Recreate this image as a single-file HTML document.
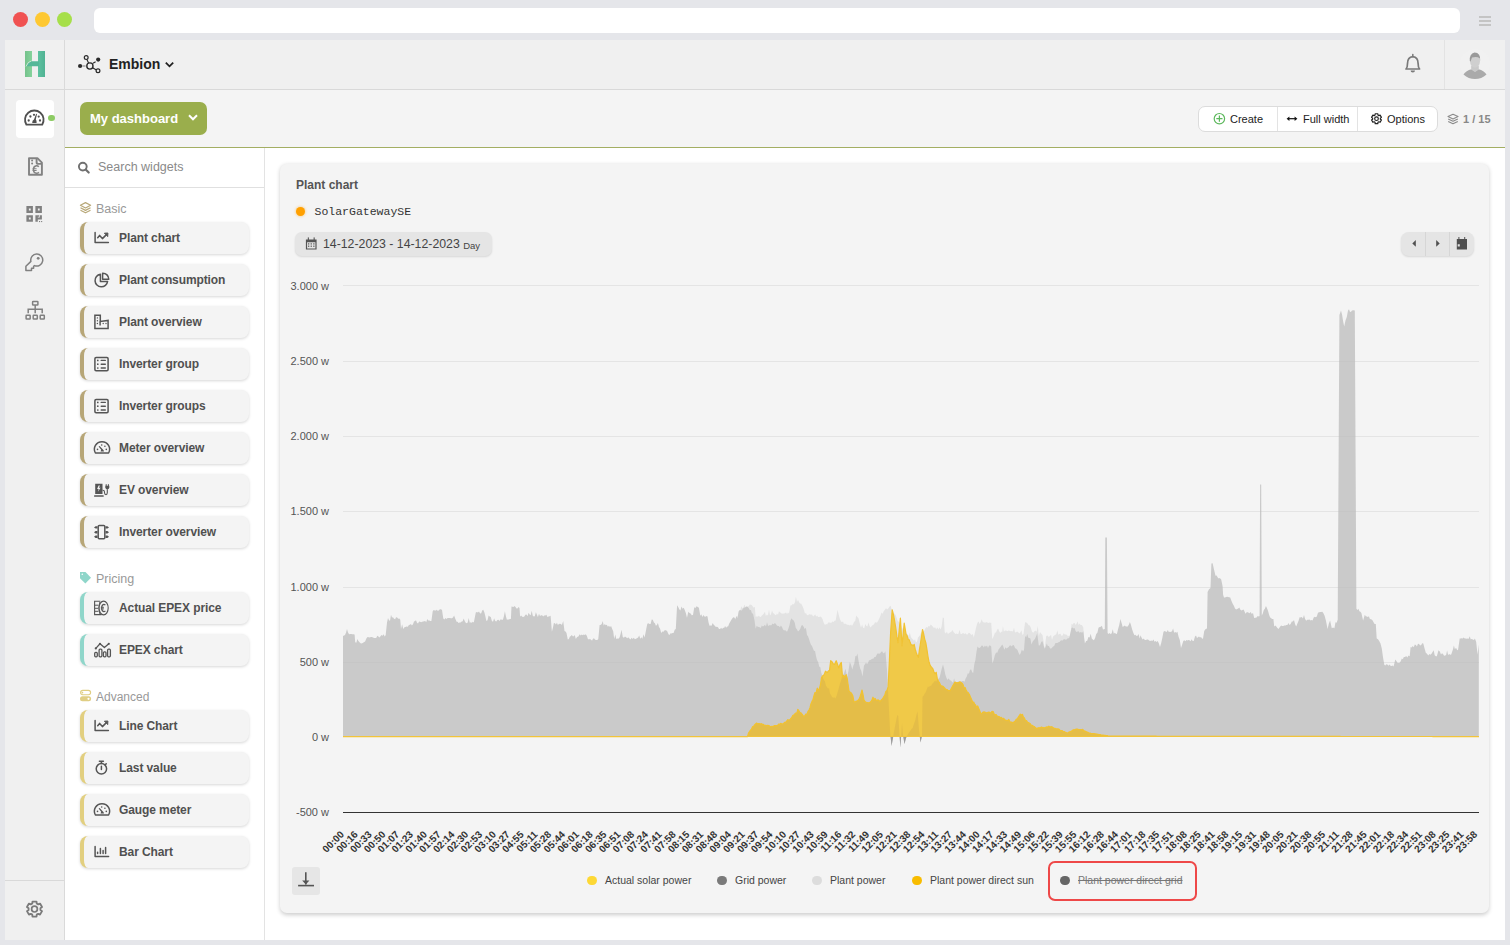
<!DOCTYPE html>
<html>
<head>
<meta charset="utf-8">
<style>
*{box-sizing:border-box;margin:0;padding:0}
html,body{width:1510px;height:945px;overflow:hidden;background:#e5e6ea;font-family:"Liberation Sans",sans-serif;position:relative}
.a{position:absolute}
.chart{position:absolute;left:0;top:0}
svg.i{position:absolute;overflow:visible}
.dot{position:absolute;width:15px;height:15px;border-radius:50%;top:12.4px}
.ham{position:absolute;left:1479px;width:12px;height:2px;background:#c4c4c4}
.sect{position:absolute;left:96px;font-size:12.5px;color:#999;line-height:14px;white-space:nowrap}
.item{position:absolute;left:80px;width:169px;height:32px;background:#f4f4f4;border-radius:8px;border-left:4px solid #b7a677;box-shadow:0 1px 3px rgba(0,0,0,.16);font-weight:bold;font-size:12px;color:#505050;line-height:32px;padding-left:35px;white-space:nowrap;letter-spacing:-0.1px}
.item svg{position:absolute;left:10px;top:8px;overflow:visible}
.item.p{border-left-color:#8fd6ca}
.item.v{border-left-color:#e2cf7f}
.legend{position:absolute;font-size:10.5px;color:#444;top:874px;line-height:13px;white-space:nowrap}
.ldot{position:absolute;width:9.5px;height:9.5px;border-radius:50%;top:875.7px}
.bt{position:absolute;top:106px;height:26px;line-height:26px;font-size:11px;color:#222;white-space:nowrap}
</style>
</head>
<body>
<!-- browser chrome -->
<div class="dot" style="left:13px;background:#f05252"></div>
<div class="dot" style="left:35px;background:#fec832"></div>
<div class="dot" style="left:57px;background:#a6df4a"></div>
<div class="a" style="left:94px;top:8px;width:1366px;height:25px;background:#fff;border-radius:6px"></div>
<div class="ham" style="top:16px"></div>
<div class="ham" style="top:20px"></div>
<div class="ham" style="top:24px"></div>

<!-- app frame -->
<div class="a" style="left:5px;top:40px;width:1500px;height:900px;background:#fff"></div>
<!-- icon bar -->
<div class="a" style="left:5px;top:40px;width:60px;height:900px;background:#f0f0f0;border-right:1px solid #dadada"></div>
<div class="a" style="left:5px;top:89px;width:59px;height:1px;background:#d9d9d9"></div>
<div class="a" style="left:5px;top:880px;width:59px;height:1px;background:#d9d9d9"></div>
<div class="a" style="left:16px;top:100px;width:38px;height:38px;background:#fff;border-radius:4px"></div>
<div class="a" style="left:48px;top:114.5px;width:6.5px;height:6.5px;background:#8dcb64;border-radius:50%"></div>
<!-- header -->
<div class="a" style="left:65px;top:40px;width:1440px;height:50px;background:#f0f0f0;border-bottom:1px solid #d9d9d9"></div>
<div class="a" style="left:1444px;top:40px;width:1px;height:49px;background:#e3e3e3"></div>
<div class="a" style="left:109px;top:56px;font-size:14px;font-weight:bold;color:#222;line-height:16px">Embion</div>
<!-- toolbar -->
<div class="a" style="left:65px;top:90px;width:1440px;height:57px;background:#f4f4f4"></div>
<div class="a" style="left:65px;top:146.5px;width:1440px;height:1.5px;background:#a3ae62"></div>
<div class="a" style="left:80px;top:102px;width:127px;height:33px;background:#9aae4c;border-radius:7px"></div>
<div class="a" style="left:90px;top:111px;color:#fff;font-weight:bold;font-size:13px;line-height:15px;white-space:nowrap">My dashboard</div>
<div class="a" style="left:1198px;top:106px;width:240px;height:26px;background:#fff;border:1px solid #dcdcdc;border-radius:7px"></div>
<div class="a" style="left:1277px;top:107px;width:1px;height:24px;background:#e3e3e3"></div>
<div class="a" style="left:1357px;top:107px;width:1px;height:24px;background:#e3e3e3"></div>
<div class="bt" style="left:1230px">Create</div>
<div class="bt" style="left:1303px">Full width</div>
<div class="bt" style="left:1387px">Options</div>
<div class="bt" style="left:1463px;font-weight:bold;color:#888">1 / 15</div>
<!-- widget sidebar -->
<div class="a" style="left:65px;top:148px;width:200px;height:792px;background:#fff;border-right:1px solid #e3e3e3"></div>
<div class="a" style="left:65px;top:187px;width:199px;height:1px;background:#e0e0e0"></div>
<div class="a" style="left:98px;top:160px;font-size:12.5px;color:#8a8a8a;line-height:14px;white-space:nowrap">Search widgets</div>
<div class="sect" style="top:202px">Basic</div>
<div class="item" style="top:222px">Plant chart</div>
<div class="item" style="top:264px">Plant consumption</div>
<div class="item" style="top:306px">Plant overview</div>
<div class="item" style="top:348px">Inverter group</div>
<div class="item" style="top:390px">Inverter groups</div>
<div class="item" style="top:432px">Meter overview</div>
<div class="item" style="top:474px">EV overview</div>
<div class="item" style="top:516px">Inverter overview</div>
<div class="sect" style="top:572px">Pricing</div>
<div class="item p" style="top:592px">Actual EPEX price</div>
<div class="item p" style="top:634px">EPEX chart</div>
<div class="sect" style="top:690px;font-size:12px">Advanced</div>
<div class="item v" style="top:710px">Line Chart</div>
<div class="item v" style="top:752px">Last value</div>
<div class="item v" style="top:794px">Gauge meter</div>
<div class="item v" style="top:836px">Bar Chart</div>

<!-- card -->
<div class="a" style="left:280px;top:164px;width:1209px;height:749px;background:#f4f4f4;border-radius:7px;box-shadow:0 1.5px 4px rgba(0,0,0,.2)"></div>
<div class="a" style="left:296px;top:178px;font-size:12px;font-weight:bold;color:#555;line-height:14px;white-space:nowrap">Plant chart</div>
<div class="a" style="left:295.5px;top:206.5px;width:9px;height:9px;background:#ffa000;border-radius:50%;box-shadow:0 0 3px rgba(255,160,0,.6)"></div>
<div class="a" style="left:314.5px;top:205px;font-family:'Liberation Mono',monospace;font-size:11.5px;color:#333;line-height:14px;white-space:nowrap">SolarGatewaySE</div>
<div class="a" style="left:295px;top:232px;width:197px;height:24px;background:#e5e5e5;border-radius:7px;box-shadow:0 1px 2px rgba(0,0,0,.12)"></div>
<div class="a" style="left:323px;top:237px;font-size:12.3px;color:#444;line-height:15px;white-space:nowrap">14-12-2023 - 14-12-2023 <span style="font-size:9.5px;position:relative;top:1px">Day</span></div>
<div class="a" style="left:1401px;top:232px;width:73px;height:24px;background:#e5e5e5;border-radius:8px;box-shadow:0 1px 2px rgba(0,0,0,.12)"></div>
<div class="a" style="left:1425px;top:232px;width:1px;height:24px;background:#d6d6d6"></div>
<div class="a" style="left:1449px;top:232px;width:1px;height:24px;background:#d6d6d6"></div>
<div class="a" style="left:292px;top:867px;width:27.5px;height:27.5px;background:#e6e6e6;border-radius:3px"></div>

<svg class="chart" width="1510" height="945" viewBox="0 0 1510 945">
<line x1="343" y1="285.5" x2="1479" y2="285.5" stroke="#e9e9e9" stroke-width="1"/>
<line x1="343" y1="361.5" x2="1479" y2="361.5" stroke="#e9e9e9" stroke-width="1"/>
<line x1="343" y1="436.5" x2="1479" y2="436.5" stroke="#e9e9e9" stroke-width="1"/>
<line x1="343" y1="511.5" x2="1479" y2="511.5" stroke="#e9e9e9" stroke-width="1"/>
<line x1="343" y1="587.5" x2="1479" y2="587.5" stroke="#e9e9e9" stroke-width="1"/>
<line x1="343" y1="662.5" x2="1479" y2="662.5" stroke="#e9e9e9" stroke-width="1"/>
<defs><clipPath id="gclip"><path d="M343.0,736.6 L343.0,636.0 L344.0,635.4 L345.0,634.9 L346.0,632.8 L347.0,629.1 L348.0,632.6 L349.1,634.2 L350.2,634.1 L351.3,633.9 L352.4,634.2 L353.5,634.2 L354.6,634.4 L355.2,642.3 L356.3,642.7 L357.4,639.1 L358.4,641.1 L359.5,642.2 L360.6,643.3 L361.6,643.4 L362.7,643.1 L363.8,642.3 L365.1,641.4 L366.5,638.3 L367.6,637.1 L368.7,637.2 L369.7,637.6 L370.8,637.1 L371.9,637.1 L373.0,637.5 L374.1,638.1 L375.2,638.0 L376.2,638.0 L377.3,635.7 L378.4,636.4 L379.4,637.4 L380.5,636.2 L381.5,635.0 L382.6,635.8 L383.6,634.3 L384.7,636.5 L385.7,635.0 L387.0,622.5 L388.0,617.9 L389.0,620.2 L390.0,620.8 L391.0,614.7 L392.0,617.6 L393.0,617.2 L394.0,618.8 L395.1,619.2 L396.1,617.2 L397.2,617.5 L398.2,618.8 L399.3,618.5 L400.3,619.8 L401.0,629.0 L402.1,624.3 L403.3,628.9 L404.4,627.2 L405.5,627.1 L406.6,626.4 L407.8,626.8 L408.9,625.1 L409.9,624.7 L410.9,623.9 L411.9,625.6 L413.0,624.2 L414.0,621.5 L415.0,620.9 L416.0,620.2 L417.0,622.7 L418.0,623.4 L419.1,621.4 L420.1,621.7 L421.1,622.3 L422.1,621.8 L423.1,621.4 L424.2,621.3 L425.2,621.0 L426.2,622.2 L427.3,619.1 L428.3,620.6 L429.3,620.6 L430.4,621.0 L431.4,621.1 L432.7,611.2 L433.7,610.0 L434.8,610.5 L435.8,610.6 L436.8,609.8 L437.9,610.9 L438.9,610.2 L439.9,609.2 L441.0,609.2 L442.0,609.9 L443.3,618.5 L444.4,619.4 L445.5,617.9 L446.5,618.9 L447.6,618.1 L448.7,618.0 L449.8,617.9 L450.9,618.3 L452.0,618.3 L453.0,617.6 L454.1,615.6 L455.2,618.5 L456.6,621.8 L457.6,621.7 L458.6,623.0 L459.6,622.6 L460.6,622.4 L461.7,621.5 L462.7,621.3 L463.7,618.6 L464.7,620.9 L465.7,622.7 L466.7,623.2 L467.7,622.5 L468.7,618.1 L469.8,622.8 L470.8,622.2 L471.8,622.7 L472.8,621.8 L473.8,622.5 L474.8,617.4 L475.8,612.5 L476.9,612.1 L477.9,612.6 L479.0,611.6 L480.1,613.6 L481.2,613.3 L482.2,610.4 L483.3,609.7 L484.4,612.5 L485.4,616.6 L486.4,621.1 L487.5,620.3 L488.6,615.4 L489.7,616.5 L490.8,617.1 L491.9,621.0 L493.0,621.8 L494.1,618.3 L495.2,621.0 L496.3,621.4 L497.4,620.1 L498.5,619.7 L499.6,621.0 L500.7,619.2 L501.8,619.7 L502.9,619.8 L503.9,616.2 L504.9,611.2 L505.9,616.3 L506.9,619.8 L507.9,619.4 L508.9,619.4 L509.9,619.1 L510.9,619.1 L511.5,606.6 L512.5,606.7 L513.5,607.0 L514.5,606.0 L515.5,607.1 L516.5,608.5 L517.5,608.6 L518.5,607.1 L519.5,607.9 L520.1,616.5 L521.2,615.4 L522.2,616.7 L523.3,616.9 L524.3,616.6 L525.4,614.8 L526.5,614.4 L527.5,616.3 L528.6,612.7 L529.6,614.5 L530.7,615.2 L531.7,610.7 L532.8,615.8 L533.8,616.6 L534.8,616.3 L535.9,612.3 L536.9,614.7 L537.9,617.0 L539.0,613.8 L540.0,616.0 L541.1,615.3 L542.1,615.3 L543.2,616.6 L544.2,615.6 L545.3,615.5 L546.4,614.8 L547.4,617.1 L548.5,616.5 L549.5,616.3 L550.6,615.8 L551.9,631.7 L552.9,627.8 L553.9,623.0 L554.9,623.2 L555.9,624.5 L556.9,622.7 L557.9,625.1 L558.9,624.1 L559.9,623.7 L560.9,624.0 L561.9,625.0 L563.2,621.0 L564.5,631.0 L565.5,631.5 L566.5,633.0 L567.8,639.6 L568.8,638.9 L569.8,636.8 L570.8,635.9 L571.8,635.0 L572.8,636.2 L573.8,636.2 L574.8,634.9 L575.8,638.9 L577.1,637.0 L578.4,636.5 L579.7,634.3 L580.7,635.6 L581.7,634.6 L582.7,635.2 L583.7,634.4 L584.7,634.9 L585.7,634.3 L586.8,635.8 L587.9,639.0 L589.0,639.6 L590.0,638.8 L591.1,640.0 L592.1,640.6 L593.1,638.6 L594.2,638.6 L595.2,639.7 L596.2,640.1 L597.3,639.9 L598.3,638.9 L599.6,625.0 L600.6,624.9 L601.7,624.1 L602.7,621.1 L603.7,625.5 L604.8,624.1 L605.8,625.3 L606.8,624.8 L607.9,626.8 L608.9,625.7 L610.0,626.9 L611.1,626.1 L612.2,629.0 L613.2,631.3 L614.2,638.9 L615.3,634.5 L616.3,639.0 L617.4,638.6 L618.4,638.7 L619.5,637.6 L620.5,634.3 L621.5,629.7 L622.8,637.0 L623.9,637.7 L625.0,636.4 L626.1,637.2 L627.2,638.3 L628.3,637.2 L629.4,638.6 L630.5,639.5 L631.6,637.7 L632.7,638.9 L633.8,637.8 L634.9,639.2 L635.9,638.7 L637.0,638.3 L638.1,637.5 L639.2,635.6 L640.3,638.7 L641.4,637.3 L642.4,638.8 L643.5,634.3 L644.6,637.6 L646.0,630.3 L647.3,623.7 L648.4,623.2 L649.5,624.0 L650.6,624.0 L651.7,619.6 L652.8,619.8 L653.9,622.4 L654.9,623.2 L655.9,625.7 L656.9,625.0 L657.9,623.0 L659.0,627.0 L660.1,628.7 L661.2,633.0 L662.4,631.5 L663.5,631.8 L664.6,630.3 L665.8,630.3 L667.1,631.1 L668.5,634.3 L669.5,635.0 L670.5,633.3 L671.5,633.5 L672.5,633.0 L673.6,632.9 L674.7,629.8 L675.8,629.0 L677.1,605.2 L678.2,606.9 L679.3,609.3 L680.4,610.5 L681.5,606.6 L682.6,608.8 L683.7,607.8 L684.8,610.3 L685.9,613.2 L687.0,617.7 L688.3,611.8 L689.5,613.0 L690.6,613.6 L691.8,615.2 L693.0,615.0 L694.3,607.2 L695.4,608.1 L696.6,606.3 L697.8,607.0 L698.9,607.8 L700.3,615.8 L701.3,614.2 L702.4,616.9 L703.4,615.1 L704.4,616.4 L705.4,616.8 L706.5,615.9 L707.5,616.4 L708.5,622.2 L709.5,625.7 L710.6,625.5 L711.6,625.7 L712.7,623.0 L713.7,624.8 L714.8,625.7 L715.9,626.9 L716.9,626.8 L718.0,627.2 L719.0,629.0 L720.1,629.0 L721.1,627.8 L722.1,628.9 L723.1,627.7 L724.1,628.0 L725.1,626.1 L726.1,627.8 L727.1,626.6 L728.1,626.4 L729.2,623.4 L730.3,621.7 L731.4,619.7 L732.4,618.3 L733.4,617.3 L734.4,617.4 L735.4,619.4 L736.4,615.8 L737.4,618.4 L738.7,611.2 L740.0,609.7 L741.3,610.7 L742.4,609.5 L743.5,607.9 L744.5,607.6 L745.6,607.3 L746.7,606.5 L747.8,607.1 L748.8,608.2 L749.9,610.3 L750.9,610.0 L752.0,613.5 L753.0,613.4 L754.4,619.8 L755.7,628.7 L756.7,625.8 L757.7,626.8 L758.7,626.9 L759.8,627.3 L760.8,628.1 L761.8,625.5 L762.8,626.6 L763.8,626.0 L764.9,624.7 L766.0,626.4 L767.0,622.3 L768.1,626.0 L769.2,625.3 L770.3,625.3 L771.4,625.2 L772.4,623.6 L773.5,624.3 L774.6,623.3 L775.6,623.4 L776.7,625.2 L777.8,625.9 L778.8,626.0 L779.9,627.2 L780.9,625.4 L782.0,627.0 L783.0,629.6 L784.1,630.4 L785.1,629.9 L786.2,631.3 L787.2,631.4 L788.3,628.7 L789.4,625.4 L790.4,620.4 L791.5,618.2 L792.6,619.7 L793.7,620.5 L794.8,623.1 L795.8,627.9 L796.9,629.2 L798.0,631.4 L799.1,630.5 L800.2,629.0 L801.3,625.8 L802.4,625.0 L803.5,626.4 L804.7,629.0 L805.9,627.8 L807.0,635.0 L808.0,636.2 L809.0,638.9 L810.0,642.2 L811.0,644.8 L812.0,646.0 L813.0,648.6 L814.0,651.0 L815.0,650.8 L816.1,656.4 L817.1,660.2 L818.2,662.3 L819.2,666.5 L820.3,667.3 L821.3,672.7 L822.7,677.0 L823.8,679.9 L824.9,681.3 L825.9,685.8 L827.0,687.0 L828.0,688.8 L829.0,688.1 L830.0,693.6 L831.0,695.0 L832.1,697.1 L833.2,697.8 L834.3,697.3 L835.4,698.4 L836.7,695.6 L838.0,690.8 L839.0,687.2 L840.0,683.4 L841.0,681.1 L842.0,676.4 L843.8,673.8 L845.5,668.8 L847.2,677.0 L848.5,670.6 L849.8,662.0 L851.0,664.7 L852.3,669.6 L853.3,665.8 L854.3,663.5 L855.4,656.0 L856.4,656.3 L857.4,653.5 L859.0,663.7 L860.2,668.6 L861.3,671.1 L862.5,676.4 L864.0,665.4 L865.0,664.3 L866.0,662.5 L867.0,664.1 L868.0,663.0 L869.0,660.3 L870.0,660.3 L871.1,659.4 L872.2,658.8 L873.3,658.8 L874.5,657.0 L875.6,657.0 L876.7,654.8 L877.8,653.3 L878.9,653.8 L880.0,653.4 L881.1,652.1 L882.1,651.2 L883.2,653.3 L884.3,652.9 L885.4,651.2 L887.0,670.0 L888.5,700.0 L890.0,730.0 L891.5,746.0 L893.0,738.0 L894.1,731.3 L895.2,725.6 L896.3,719.7 L897.3,715.1 L898.3,716.0 L899.5,735.0 L900.4,747.5 L902.0,723.0 L903.0,735.0 L904.5,744.0 L906.0,738.0 L907.8,734.4 L909.0,732.6 L910.2,731.1 L911.5,729.1 L912.7,727.9 L913.9,724.0 L915.2,720.6 L916.4,714.9 L917.6,711.5 L919.0,730.0 L920.5,742.6 L922.0,736.0 L922.5,696.7 L923.6,695.7 L924.7,693.5 L925.8,691.9 L926.8,689.3 L927.9,686.5 L929.0,686.9 L930.0,685.8 L931.0,686.1 L932.0,684.2 L933.0,683.0 L934.0,682.0 L935.1,680.4 L936.2,681.7 L937.2,679.4 L938.3,678.7 L939.4,678.0 L940.6,673.4 L941.8,668.2 L943.0,664.6 L944.2,669.1 L945.3,674.4 L946.5,678.0 L947.6,679.9 L948.7,678.3 L949.8,680.3 L950.9,680.4 L952.0,681.7 L953.0,682.8 L954.1,678.2 L955.1,682.7 L956.2,682.1 L957.2,682.8 L958.2,681.4 L959.3,681.2 L960.3,682.9 L961.4,681.2 L962.4,681.1 L963.5,681.1 L964.5,681.7 L965.6,678.5 L966.7,676.8 L967.8,673.3 L968.9,673.8 L970.0,670.1 L971.1,669.3 L972.2,672.3 L973.2,673.0 L974.3,664.2 L975.4,659.9 L976.4,652.3 L977.5,646.6 L978.6,647.7 L979.6,647.9 L980.7,647.0 L981.7,645.4 L982.8,645.8 L983.8,647.4 L984.9,645.4 L985.9,646.7 L987.0,645.6 L988.0,647.9 L989.1,645.6 L990.1,645.6 L991.2,646.6 L992.3,663.5 L993.6,660.3 L994.9,655.0 L996.1,652.4 L997.3,652.8 L998.5,649.4 L999.7,648.1 L1001.0,646.2 L1002.3,644.4 L1003.3,646.6 L1004.4,649.7 L1005.5,647.3 L1006.5,648.5 L1007.6,647.7 L1008.7,647.0 L1009.7,645.4 L1010.8,645.5 L1011.9,646.6 L1012.9,644.7 L1014.0,645.5 L1015.2,648.3 L1016.3,648.7 L1017.5,650.0 L1018.6,652.9 L1019.8,655.0 L1020.8,652.7 L1021.9,649.4 L1023.0,651.5 L1024.0,649.7 L1025.1,636.0 L1026.2,637.2 L1027.2,634.0 L1028.3,637.8 L1029.3,638.1 L1030.4,638.6 L1031.4,644.4 L1032.6,641.7 L1033.7,640.2 L1034.9,638.9 L1036.0,636.4 L1037.2,633.3 L1038.8,645.5 L1040.0,645.3 L1041.3,641.7 L1042.5,641.3 L1043.6,645.6 L1044.7,648.7 L1045.8,646.4 L1046.8,643.4 L1047.8,645.9 L1048.9,646.0 L1050.0,648.3 L1051.0,648.7 L1052.0,647.7 L1053.1,646.6 L1054.2,646.1 L1055.2,643.3 L1056.3,643.1 L1057.3,643.1 L1058.4,642.3 L1059.5,641.9 L1060.5,640.8 L1061.6,640.2 L1062.7,640.5 L1063.7,639.2 L1064.8,639.3 L1065.8,639.7 L1066.9,639.3 L1067.9,638.1 L1069.0,638.6 L1070.3,633.6 L1071.6,628.0 L1072.6,627.5 L1073.6,628.6 L1074.6,628.0 L1075.6,631.0 L1076.6,631.9 L1077.6,631.4 L1078.6,631.2 L1079.6,632.8 L1080.8,632.0 L1082.1,632.7 L1083.3,631.2 L1084.9,643.4 L1086.1,641.1 L1087.2,640.8 L1088.4,637.1 L1089.6,637.6 L1090.7,633.8 L1091.8,638.6 L1092.8,639.4 L1093.9,640.2 L1095.1,638.0 L1096.2,633.9 L1097.4,632.8 L1098.5,627.7 L1099.7,627.0 L1100.8,626.7 L1101.9,625.7 L1103.0,629.4 L1104.8,629.0 L1105.3,537.5 L1106.9,537.5 L1107.6,633.0 L1108.6,634.0 L1109.7,633.0 L1110.7,634.3 L1111.7,633.2 L1112.8,629.2 L1113.8,633.7 L1114.8,632.7 L1115.9,633.8 L1116.9,634.0 L1118.1,629.1 L1119.2,625.3 L1120.4,619.0 L1121.6,623.1 L1122.7,627.0 L1123.7,626.2 L1124.8,625.5 L1125.8,626.5 L1126.8,626.6 L1127.8,626.6 L1128.9,624.6 L1129.9,622.0 L1130.9,624.8 L1132.1,629.2 L1133.2,632.6 L1134.4,635.2 L1135.4,634.7 L1136.5,635.9 L1137.5,635.8 L1138.6,634.1 L1139.6,638.5 L1140.6,635.3 L1141.7,637.9 L1142.7,639.5 L1143.8,638.5 L1144.8,640.0 L1145.9,639.9 L1147.0,639.5 L1148.0,639.5 L1149.1,640.6 L1150.2,641.1 L1151.2,640.6 L1152.3,640.9 L1153.4,639.5 L1154.5,641.7 L1155.5,641.0 L1156.6,642.0 L1157.7,641.0 L1158.8,643.2 L1160.0,646.9 L1161.2,643.1 L1162.3,638.1 L1163.5,631.8 L1164.6,631.0 L1165.6,631.4 L1166.7,632.0 L1167.8,629.9 L1168.8,631.9 L1169.9,631.7 L1171.0,632.0 L1172.1,631.0 L1173.1,628.5 L1174.2,632.8 L1175.3,631.9 L1176.3,632.7 L1177.4,631.8 L1178.6,636.7 L1179.8,640.0 L1181.0,648.0 L1182.2,644.4 L1183.3,641.0 L1184.3,640.3 L1185.4,641.2 L1186.4,640.0 L1187.5,640.5 L1188.5,640.1 L1189.5,640.2 L1190.6,641.2 L1191.6,639.3 L1192.7,641.0 L1193.7,641.0 L1195.0,636.4 L1196.0,635.6 L1197.0,638.1 L1198.0,637.3 L1199.0,636.4 L1200.0,637.4 L1201.0,637.1 L1202.0,638.4 L1203.0,638.7 L1204.2,631.0 L1205.6,629.1 L1207.0,628.5 L1207.6,592.0 L1209.0,589.2 L1210.5,588.0 L1211.4,563.5 L1212.6,563.3 L1214.0,569.5 L1215.5,575.7 L1216.6,575.6 L1217.7,577.6 L1218.7,578.5 L1219.8,578.0 L1221.2,579.5 L1222.6,586.2 L1223.1,594.8 L1224.0,597.6 L1225.0,597.5 L1226.1,597.1 L1227.1,596.7 L1228.1,597.0 L1229.2,597.3 L1230.2,597.6 L1231.5,601.0 L1232.7,603.7 L1234.0,606.0 L1235.0,608.6 L1236.1,609.5 L1237.2,608.9 L1238.2,608.6 L1239.3,607.5 L1240.4,609.8 L1241.4,610.5 L1242.5,610.0 L1243.6,609.5 L1245.5,613.8 L1246.9,611.9 L1248.3,612.4 L1249.5,613.2 L1250.7,611.9 L1251.8,614.1 L1253.0,613.0 L1254.2,618.0 L1255.4,617.8 L1256.6,617.4 L1257.7,616.1 L1258.9,616.6 L1259.6,616.0 L1260.1,484.6 L1261.2,484.6 L1261.8,615.5 L1262.8,613.6 L1263.8,609.9 L1264.9,608.8 L1265.9,606.1 L1266.9,608.0 L1268.0,610.7 L1269.0,614.4 L1270.0,617.3 L1271.1,618.2 L1272.3,619.0 L1273.4,619.0 L1274.2,626.6 L1275.3,625.5 L1276.3,626.6 L1277.4,628.0 L1278.5,629.1 L1280.2,626.6 L1281.2,625.4 L1282.3,625.9 L1283.3,625.9 L1284.3,625.4 L1285.4,625.5 L1286.4,625.1 L1287.4,625.1 L1288.5,623.0 L1289.5,624.9 L1290.6,624.0 L1291.8,621.4 L1292.9,621.5 L1294.0,620.1 L1295.1,624.3 L1296.2,626.6 L1297.3,623.8 L1298.5,621.0 L1299.6,617.3 L1300.7,617.5 L1301.8,616.9 L1302.9,618.4 L1304.0,615.1 L1305.1,618.9 L1306.2,620.7 L1307.3,619.8 L1308.4,619.7 L1309.5,619.4 L1310.6,620.6 L1311.6,619.9 L1312.6,620.4 L1313.7,617.4 L1314.7,616.7 L1315.7,617.3 L1316.8,616.6 L1318.0,612.7 L1319.1,612.2 L1320.1,611.9 L1321.2,612.1 L1322.2,611.8 L1323.3,613.0 L1324.6,615.7 L1325.9,620.6 L1327.6,629.1 L1328.8,623.7 L1330.1,620.6 L1331.8,628.3 L1333.1,627.5 L1334.4,628.3 L1335.5,622.2 L1336.6,622.7 L1337.7,619.8 L1339.4,315.0 L1341.0,310.6 L1342.1,314.8 L1343.1,321.2 L1344.2,326.4 L1345.5,320.4 L1346.8,317.0 L1348.0,310.6 L1349.0,309.2 L1350.0,312.0 L1351.0,311.8 L1352.0,310.6 L1353.4,310.3 L1354.8,310.6 L1356.4,608.8 L1357.4,609.9 L1358.4,608.8 L1359.4,611.3 L1360.4,611.8 L1361.4,613.0 L1363.1,620.6 L1364.8,614.7 L1365.8,616.2 L1366.8,616.4 L1367.9,616.9 L1368.9,616.3 L1369.9,619.0 L1371.1,619.3 L1372.3,620.0 L1373.4,622.0 L1374.6,624.0 L1375.8,624.0 L1376.7,638.4 L1378.0,639.3 L1379.2,641.0 L1380.5,643.6 L1381.8,648.6 L1383.0,657.3 L1384.3,664.7 L1385.3,665.5 L1386.4,664.3 L1387.4,664.5 L1388.4,665.8 L1389.5,664.6 L1390.5,665.8 L1391.5,666.0 L1392.6,665.4 L1393.6,666.4 L1395.3,659.6 L1396.4,661.1 L1397.6,662.9 L1398.7,663.0 L1399.7,662.8 L1400.7,661.2 L1401.8,658.5 L1402.8,659.2 L1403.8,657.0 L1405.0,657.1 L1406.2,656.1 L1407.3,657.6 L1408.5,655.4 L1409.7,656.2 L1410.6,646.9 L1411.7,647.5 L1412.7,645.9 L1413.8,647.2 L1414.8,644.5 L1415.9,645.0 L1416.9,646.4 L1418.0,643.8 L1419.1,644.0 L1420.1,645.5 L1421.2,645.1 L1422.2,643.3 L1423.3,643.5 L1424.5,648.3 L1425.8,652.8 L1427.0,653.8 L1428.3,655.4 L1429.4,654.0 L1430.4,654.8 L1431.5,653.7 L1432.6,652.0 L1433.6,650.2 L1434.7,655.3 L1435.8,656.2 L1436.8,656.2 L1438.5,650.3 L1439.8,651.4 L1441.0,654.5 L1442.0,653.3 L1443.0,653.9 L1444.1,655.7 L1445.1,655.6 L1446.1,654.9 L1447.1,650.5 L1448.1,654.9 L1449.2,653.9 L1450.2,654.7 L1451.2,654.5 L1452.9,649.4 L1453.9,645.5 L1454.9,649.3 L1456.0,647.8 L1457.0,649.7 L1458.0,650.3 L1459.7,638.4 L1460.7,638.4 L1461.7,638.2 L1462.7,638.4 L1463.7,637.5 L1464.7,638.4 L1465.7,638.5 L1466.7,638.7 L1467.7,638.5 L1468.7,638.7 L1469.7,636.2 L1470.7,639.3 L1471.8,638.9 L1472.8,639.4 L1473.9,639.9 L1474.9,638.4 L1476.2,641.9 L1477.5,654.5 L1478.8,644.4 L1478.8,736.6 Z"/></clipPath></defs>
<path d="M735.0,736.6 L735.0,618.8 L736.0,617.9 L737.1,616.9 L738.1,615.3 L739.1,611.1 L740.1,612.1 L741.2,606.2 L742.2,608.0 L743.3,607.7 L744.5,604.5 L745.6,607.3 L746.7,606.2 L747.8,606.8 L748.8,606.1 L749.9,604.4 L750.9,604.7 L752.0,605.3 L753.4,607.4 L754.8,607.0 L755.7,617.0 L756.7,616.3 L757.7,616.7 L758.8,615.7 L759.8,616.8 L760.8,617.1 L761.8,615.6 L762.8,614.8 L763.9,613.6 L764.9,611.8 L765.9,616.0 L766.9,614.5 L767.9,615.4 L769.0,609.5 L770.0,615.4 L771.0,614.3 L772.0,610.4 L773.0,612.9 L774.0,613.4 L775.0,614.8 L776.0,615.2 L777.0,613.6 L778.0,614.7 L779.0,611.3 L780.0,612.6 L781.0,612.7 L782.0,614.0 L783.0,613.3 L784.0,613.8 L785.0,613.1 L786.0,612.5 L787.0,614.0 L788.0,612.6 L789.0,613.4 L790.4,605.5 L791.7,605.3 L792.8,603.7 L793.8,604.4 L794.9,602.4 L795.9,596.8 L797.0,601.8 L798.0,600.0 L799.1,602.2 L800.1,603.5 L801.2,603.8 L802.2,605.5 L803.3,608.0 L805.0,613.4 L806.0,613.1 L807.0,615.1 L808.1,615.3 L809.1,614.3 L810.1,614.5 L811.1,614.5 L812.1,614.7 L813.1,616.4 L814.2,615.4 L815.2,614.6 L816.2,616.6 L817.2,615.7 L818.2,617.0 L819.3,617.0 L820.3,616.4 L821.3,617.0 L822.5,619.1 L823.8,623.0 L825.0,625.0 L826.1,624.0 L827.1,624.5 L828.2,622.4 L829.3,622.6 L830.4,622.7 L831.4,622.7 L832.5,621.5 L833.6,622.1 L834.6,620.7 L835.7,620.6 L837.5,609.8 L838.7,614.7 L839.8,618.8 L841.0,621.5 L842.0,622.0 L843.0,621.5 L844.0,623.9 L845.0,623.6 L846.0,624.1 L847.0,624.7 L848.0,624.8 L849.0,625.1 L850.0,625.5 L851.0,624.4 L852.0,626.0 L853.1,624.0 L854.1,621.7 L855.2,620.9 L856.2,615.4 L857.3,617.0 L858.5,618.3 L859.8,623.4 L861.0,627.8 L862.1,624.6 L863.1,627.7 L864.2,628.3 L865.3,624.0 L866.4,625.9 L867.4,626.4 L868.5,622.5 L869.6,625.9 L870.6,627.4 L871.7,626.0 L872.8,624.9 L873.9,624.5 L875.0,622.3 L876.1,622.5 L877.2,622.6 L878.3,620.5 L879.4,618.3 L880.5,615.6 L881.5,612.5 L882.6,613.7 L883.7,611.3 L884.8,609.8 L886.0,608.3 L887.1,609.4 L888.3,608.5 L889.4,606.8 L890.6,605.7 L891.6,609.1 L892.7,609.8 L893.7,613.4 L894.8,613.7 L895.8,615.4 L896.9,618.4 L897.9,621.4 L899.0,621.6 L900.0,625.0 L901.1,625.8 L902.2,628.4 L903.3,628.4 L904.5,631.6 L905.6,632.0 L906.7,633.4 L907.8,634.4 L908.8,636.1 L909.8,632.5 L910.9,637.0 L911.9,638.6 L912.9,639.2 L914.0,640.8 L915.0,639.3 L916.0,642.6 L917.0,641.6 L918.0,637.4 L919.0,636.5 L920.0,635.3 L921.0,632.8 L922.1,631.8 L923.2,630.7 L924.2,631.0 L925.3,628.6 L926.4,627.1 L927.5,627.8 L928.5,625.9 L929.6,626.6 L930.7,624.6 L931.8,625.6 L932.9,626.8 L934.0,627.9 L935.1,627.3 L936.2,629.2 L937.3,627.5 L938.4,629.4 L939.5,627.2 L940.6,629.5 L941.7,626.2 L942.8,617.5 L943.9,618.0 L944.7,632.3 L945.8,633.6 L946.9,631.7 L947.9,633.9 L949.0,633.3 L950.1,632.3 L951.2,632.1 L952.3,629.9 L953.3,631.4 L954.4,632.9 L955.5,634.0 L956.5,633.5 L957.5,634.0 L958.5,633.7 L959.5,629.8 L960.6,634.0 L961.6,634.1 L962.6,633.3 L963.6,633.3 L964.6,634.0 L965.6,633.3 L966.6,634.6 L967.6,634.5 L968.7,632.8 L969.7,632.9 L970.7,634.2 L971.7,634.9 L972.7,633.9 L973.8,637.6 L975.0,632.2 L976.3,626.5 L977.5,622.8 L978.6,621.6 L979.6,624.0 L980.7,622.1 L981.7,619.3 L982.8,621.9 L983.8,622.4 L984.9,622.4 L985.9,622.4 L987.0,621.9 L988.0,623.2 L989.1,622.6 L990.1,622.8 L991.2,622.8 L992.3,639.2 L993.6,636.2 L994.9,632.8 L996.0,632.4 L997.0,630.1 L998.1,628.6 L999.1,630.9 L1000.2,633.0 L1001.2,631.7 L1002.3,631.7 L1002.9,626.0 L1003.9,631.7 L1005.0,630.6 L1006.2,630.6 L1007.3,631.2 L1008.5,630.5 L1009.6,630.7 L1010.8,631.2 L1011.9,630.9 L1012.9,631.6 L1014.0,627.7 L1015.0,632.6 L1016.1,632.3 L1017.1,631.6 L1018.2,632.2 L1019.3,633.6 L1020.3,632.4 L1021.4,630.3 L1022.4,634.9 L1023.5,633.9 L1025.1,622.2 L1026.3,622.5 L1027.4,623.2 L1028.6,625.2 L1029.8,625.4 L1030.9,627.9 L1032.0,631.7 L1033.2,632.8 L1034.3,631.5 L1035.5,630.4 L1036.7,631.7 L1037.8,626.0 L1038.8,636.0 L1040.0,632.0 L1041.3,633.7 L1042.5,635.0 L1043.6,641.5 L1044.7,648.7 L1046.2,636.0 L1047.5,635.4 L1048.7,637.1 L1050.0,636.0 L1051.0,634.7 L1052.0,640.0 L1053.1,636.6 L1054.2,635.4 L1055.3,635.1 L1056.3,634.1 L1057.4,630.4 L1058.4,634.8 L1059.5,633.9 L1060.5,633.8 L1061.6,635.9 L1062.6,635.6 L1063.7,633.3 L1064.7,634.5 L1065.8,634.4 L1066.8,634.7 L1067.9,636.3 L1069.0,635.8 L1070.0,637.0 L1071.6,623.8 L1072.6,624.8 L1073.6,623.0 L1074.6,623.1 L1075.6,625.1 L1076.6,623.4 L1077.6,621.3 L1078.6,624.9 L1079.6,623.6 L1080.6,624.9 L1081.9,625.0 L1083.3,627.5 L1084.3,642.3 L1086.0,645.0 L1086.0,736.6 Z" fill="#e3e3e3"/>
<path d="M343.0,736.6 L343.0,636.0 L344.0,635.4 L345.0,634.9 L346.0,632.8 L347.0,629.1 L348.0,632.6 L349.1,634.2 L350.2,634.1 L351.3,633.9 L352.4,634.2 L353.5,634.2 L354.6,634.4 L355.2,642.3 L356.3,642.7 L357.4,639.1 L358.4,641.1 L359.5,642.2 L360.6,643.3 L361.6,643.4 L362.7,643.1 L363.8,642.3 L365.1,641.4 L366.5,638.3 L367.6,637.1 L368.7,637.2 L369.7,637.6 L370.8,637.1 L371.9,637.1 L373.0,637.5 L374.1,638.1 L375.2,638.0 L376.2,638.0 L377.3,635.7 L378.4,636.4 L379.4,637.4 L380.5,636.2 L381.5,635.0 L382.6,635.8 L383.6,634.3 L384.7,636.5 L385.7,635.0 L387.0,622.5 L388.0,617.9 L389.0,620.2 L390.0,620.8 L391.0,614.7 L392.0,617.6 L393.0,617.2 L394.0,618.8 L395.1,619.2 L396.1,617.2 L397.2,617.5 L398.2,618.8 L399.3,618.5 L400.3,619.8 L401.0,629.0 L402.1,624.3 L403.3,628.9 L404.4,627.2 L405.5,627.1 L406.6,626.4 L407.8,626.8 L408.9,625.1 L409.9,624.7 L410.9,623.9 L411.9,625.6 L413.0,624.2 L414.0,621.5 L415.0,620.9 L416.0,620.2 L417.0,622.7 L418.0,623.4 L419.1,621.4 L420.1,621.7 L421.1,622.3 L422.1,621.8 L423.1,621.4 L424.2,621.3 L425.2,621.0 L426.2,622.2 L427.3,619.1 L428.3,620.6 L429.3,620.6 L430.4,621.0 L431.4,621.1 L432.7,611.2 L433.7,610.0 L434.8,610.5 L435.8,610.6 L436.8,609.8 L437.9,610.9 L438.9,610.2 L439.9,609.2 L441.0,609.2 L442.0,609.9 L443.3,618.5 L444.4,619.4 L445.5,617.9 L446.5,618.9 L447.6,618.1 L448.7,618.0 L449.8,617.9 L450.9,618.3 L452.0,618.3 L453.0,617.6 L454.1,615.6 L455.2,618.5 L456.6,621.8 L457.6,621.7 L458.6,623.0 L459.6,622.6 L460.6,622.4 L461.7,621.5 L462.7,621.3 L463.7,618.6 L464.7,620.9 L465.7,622.7 L466.7,623.2 L467.7,622.5 L468.7,618.1 L469.8,622.8 L470.8,622.2 L471.8,622.7 L472.8,621.8 L473.8,622.5 L474.8,617.4 L475.8,612.5 L476.9,612.1 L477.9,612.6 L479.0,611.6 L480.1,613.6 L481.2,613.3 L482.2,610.4 L483.3,609.7 L484.4,612.5 L485.4,616.6 L486.4,621.1 L487.5,620.3 L488.6,615.4 L489.7,616.5 L490.8,617.1 L491.9,621.0 L493.0,621.8 L494.1,618.3 L495.2,621.0 L496.3,621.4 L497.4,620.1 L498.5,619.7 L499.6,621.0 L500.7,619.2 L501.8,619.7 L502.9,619.8 L503.9,616.2 L504.9,611.2 L505.9,616.3 L506.9,619.8 L507.9,619.4 L508.9,619.4 L509.9,619.1 L510.9,619.1 L511.5,606.6 L512.5,606.7 L513.5,607.0 L514.5,606.0 L515.5,607.1 L516.5,608.5 L517.5,608.6 L518.5,607.1 L519.5,607.9 L520.1,616.5 L521.2,615.4 L522.2,616.7 L523.3,616.9 L524.3,616.6 L525.4,614.8 L526.5,614.4 L527.5,616.3 L528.6,612.7 L529.6,614.5 L530.7,615.2 L531.7,610.7 L532.8,615.8 L533.8,616.6 L534.8,616.3 L535.9,612.3 L536.9,614.7 L537.9,617.0 L539.0,613.8 L540.0,616.0 L541.1,615.3 L542.1,615.3 L543.2,616.6 L544.2,615.6 L545.3,615.5 L546.4,614.8 L547.4,617.1 L548.5,616.5 L549.5,616.3 L550.6,615.8 L551.9,631.7 L552.9,627.8 L553.9,623.0 L554.9,623.2 L555.9,624.5 L556.9,622.7 L557.9,625.1 L558.9,624.1 L559.9,623.7 L560.9,624.0 L561.9,625.0 L563.2,621.0 L564.5,631.0 L565.5,631.5 L566.5,633.0 L567.8,639.6 L568.8,638.9 L569.8,636.8 L570.8,635.9 L571.8,635.0 L572.8,636.2 L573.8,636.2 L574.8,634.9 L575.8,638.9 L577.1,637.0 L578.4,636.5 L579.7,634.3 L580.7,635.6 L581.7,634.6 L582.7,635.2 L583.7,634.4 L584.7,634.9 L585.7,634.3 L586.8,635.8 L587.9,639.0 L589.0,639.6 L590.0,638.8 L591.1,640.0 L592.1,640.6 L593.1,638.6 L594.2,638.6 L595.2,639.7 L596.2,640.1 L597.3,639.9 L598.3,638.9 L599.6,625.0 L600.6,624.9 L601.7,624.1 L602.7,621.1 L603.7,625.5 L604.8,624.1 L605.8,625.3 L606.8,624.8 L607.9,626.8 L608.9,625.7 L610.0,626.9 L611.1,626.1 L612.2,629.0 L613.2,631.3 L614.2,638.9 L615.3,634.5 L616.3,639.0 L617.4,638.6 L618.4,638.7 L619.5,637.6 L620.5,634.3 L621.5,629.7 L622.8,637.0 L623.9,637.7 L625.0,636.4 L626.1,637.2 L627.2,638.3 L628.3,637.2 L629.4,638.6 L630.5,639.5 L631.6,637.7 L632.7,638.9 L633.8,637.8 L634.9,639.2 L635.9,638.7 L637.0,638.3 L638.1,637.5 L639.2,635.6 L640.3,638.7 L641.4,637.3 L642.4,638.8 L643.5,634.3 L644.6,637.6 L646.0,630.3 L647.3,623.7 L648.4,623.2 L649.5,624.0 L650.6,624.0 L651.7,619.6 L652.8,619.8 L653.9,622.4 L654.9,623.2 L655.9,625.7 L656.9,625.0 L657.9,623.0 L659.0,627.0 L660.1,628.7 L661.2,633.0 L662.4,631.5 L663.5,631.8 L664.6,630.3 L665.8,630.3 L667.1,631.1 L668.5,634.3 L669.5,635.0 L670.5,633.3 L671.5,633.5 L672.5,633.0 L673.6,632.9 L674.7,629.8 L675.8,629.0 L677.1,605.2 L678.2,606.9 L679.3,609.3 L680.4,610.5 L681.5,606.6 L682.6,608.8 L683.7,607.8 L684.8,610.3 L685.9,613.2 L687.0,617.7 L688.3,611.8 L689.5,613.0 L690.6,613.6 L691.8,615.2 L693.0,615.0 L694.3,607.2 L695.4,608.1 L696.6,606.3 L697.8,607.0 L698.9,607.8 L700.3,615.8 L701.3,614.2 L702.4,616.9 L703.4,615.1 L704.4,616.4 L705.4,616.8 L706.5,615.9 L707.5,616.4 L708.5,622.2 L709.5,625.7 L710.6,625.5 L711.6,625.7 L712.7,623.0 L713.7,624.8 L714.8,625.7 L715.9,626.9 L716.9,626.8 L718.0,627.2 L719.0,629.0 L720.1,629.0 L721.1,627.8 L722.1,628.9 L723.1,627.7 L724.1,628.0 L725.1,626.1 L726.1,627.8 L727.1,626.6 L728.1,626.4 L729.2,623.4 L730.3,621.7 L731.4,619.7 L732.4,618.3 L733.4,617.3 L734.4,617.4 L735.4,619.4 L736.4,615.8 L737.4,618.4 L738.7,611.2 L740.0,609.7 L741.3,610.7 L742.4,609.5 L743.5,607.9 L744.5,607.6 L745.6,607.3 L746.7,606.5 L747.8,607.1 L748.8,608.2 L749.9,610.3 L750.9,610.0 L752.0,613.5 L753.0,613.4 L754.4,619.8 L755.7,628.7 L756.7,625.8 L757.7,626.8 L758.7,626.9 L759.8,627.3 L760.8,628.1 L761.8,625.5 L762.8,626.6 L763.8,626.0 L764.9,624.7 L766.0,626.4 L767.0,622.3 L768.1,626.0 L769.2,625.3 L770.3,625.3 L771.4,625.2 L772.4,623.6 L773.5,624.3 L774.6,623.3 L775.6,623.4 L776.7,625.2 L777.8,625.9 L778.8,626.0 L779.9,627.2 L780.9,625.4 L782.0,627.0 L783.0,629.6 L784.1,630.4 L785.1,629.9 L786.2,631.3 L787.2,631.4 L788.3,628.7 L789.4,625.4 L790.4,620.4 L791.5,618.2 L792.6,619.7 L793.7,620.5 L794.8,623.1 L795.8,627.9 L796.9,629.2 L798.0,631.4 L799.1,630.5 L800.2,629.0 L801.3,625.8 L802.4,625.0 L803.5,626.4 L804.7,629.0 L805.9,627.8 L807.0,635.0 L808.0,636.2 L809.0,638.9 L810.0,642.2 L811.0,644.8 L812.0,646.0 L813.0,648.6 L814.0,651.0 L815.0,650.8 L816.1,656.4 L817.1,660.2 L818.2,662.3 L819.2,666.5 L820.3,667.3 L821.3,672.7 L822.7,677.0 L823.8,679.9 L824.9,681.3 L825.9,685.8 L827.0,687.0 L828.0,688.8 L829.0,688.1 L830.0,693.6 L831.0,695.0 L832.1,697.1 L833.2,697.8 L834.3,697.3 L835.4,698.4 L836.7,695.6 L838.0,690.8 L839.0,687.2 L840.0,683.4 L841.0,681.1 L842.0,676.4 L843.8,673.8 L845.5,668.8 L847.2,677.0 L848.5,670.6 L849.8,662.0 L851.0,664.7 L852.3,669.6 L853.3,665.8 L854.3,663.5 L855.4,656.0 L856.4,656.3 L857.4,653.5 L859.0,663.7 L860.2,668.6 L861.3,671.1 L862.5,676.4 L864.0,665.4 L865.0,664.3 L866.0,662.5 L867.0,664.1 L868.0,663.0 L869.0,660.3 L870.0,660.3 L871.1,659.4 L872.2,658.8 L873.3,658.8 L874.5,657.0 L875.6,657.0 L876.7,654.8 L877.8,653.3 L878.9,653.8 L880.0,653.4 L881.1,652.1 L882.1,651.2 L883.2,653.3 L884.3,652.9 L885.4,651.2 L887.0,670.0 L888.5,700.0 L890.0,730.0 L891.5,746.0 L893.0,738.0 L894.1,731.3 L895.2,725.6 L896.3,719.7 L897.3,715.1 L898.3,716.0 L899.5,735.0 L900.4,747.5 L902.0,723.0 L903.0,735.0 L904.5,744.0 L906.0,738.0 L907.8,734.4 L909.0,732.6 L910.2,731.1 L911.5,729.1 L912.7,727.9 L913.9,724.0 L915.2,720.6 L916.4,714.9 L917.6,711.5 L919.0,730.0 L920.5,742.6 L922.0,736.0 L922.5,696.7 L923.6,695.7 L924.7,693.5 L925.8,691.9 L926.8,689.3 L927.9,686.5 L929.0,686.9 L930.0,685.8 L931.0,686.1 L932.0,684.2 L933.0,683.0 L934.0,682.0 L935.1,680.4 L936.2,681.7 L937.2,679.4 L938.3,678.7 L939.4,678.0 L940.6,673.4 L941.8,668.2 L943.0,664.6 L944.2,669.1 L945.3,674.4 L946.5,678.0 L947.6,679.9 L948.7,678.3 L949.8,680.3 L950.9,680.4 L952.0,681.7 L953.0,682.8 L954.1,678.2 L955.1,682.7 L956.2,682.1 L957.2,682.8 L958.2,681.4 L959.3,681.2 L960.3,682.9 L961.4,681.2 L962.4,681.1 L963.5,681.1 L964.5,681.7 L965.6,678.5 L966.7,676.8 L967.8,673.3 L968.9,673.8 L970.0,670.1 L971.1,669.3 L972.2,672.3 L973.2,673.0 L974.3,664.2 L975.4,659.9 L976.4,652.3 L977.5,646.6 L978.6,647.7 L979.6,647.9 L980.7,647.0 L981.7,645.4 L982.8,645.8 L983.8,647.4 L984.9,645.4 L985.9,646.7 L987.0,645.6 L988.0,647.9 L989.1,645.6 L990.1,645.6 L991.2,646.6 L992.3,663.5 L993.6,660.3 L994.9,655.0 L996.1,652.4 L997.3,652.8 L998.5,649.4 L999.7,648.1 L1001.0,646.2 L1002.3,644.4 L1003.3,646.6 L1004.4,649.7 L1005.5,647.3 L1006.5,648.5 L1007.6,647.7 L1008.7,647.0 L1009.7,645.4 L1010.8,645.5 L1011.9,646.6 L1012.9,644.7 L1014.0,645.5 L1015.2,648.3 L1016.3,648.7 L1017.5,650.0 L1018.6,652.9 L1019.8,655.0 L1020.8,652.7 L1021.9,649.4 L1023.0,651.5 L1024.0,649.7 L1025.1,636.0 L1026.2,637.2 L1027.2,634.0 L1028.3,637.8 L1029.3,638.1 L1030.4,638.6 L1031.4,644.4 L1032.6,641.7 L1033.7,640.2 L1034.9,638.9 L1036.0,636.4 L1037.2,633.3 L1038.8,645.5 L1040.0,645.3 L1041.3,641.7 L1042.5,641.3 L1043.6,645.6 L1044.7,648.7 L1045.8,646.4 L1046.8,643.4 L1047.8,645.9 L1048.9,646.0 L1050.0,648.3 L1051.0,648.7 L1052.0,647.7 L1053.1,646.6 L1054.2,646.1 L1055.2,643.3 L1056.3,643.1 L1057.3,643.1 L1058.4,642.3 L1059.5,641.9 L1060.5,640.8 L1061.6,640.2 L1062.7,640.5 L1063.7,639.2 L1064.8,639.3 L1065.8,639.7 L1066.9,639.3 L1067.9,638.1 L1069.0,638.6 L1070.3,633.6 L1071.6,628.0 L1072.6,627.5 L1073.6,628.6 L1074.6,628.0 L1075.6,631.0 L1076.6,631.9 L1077.6,631.4 L1078.6,631.2 L1079.6,632.8 L1080.8,632.0 L1082.1,632.7 L1083.3,631.2 L1084.9,643.4 L1086.1,641.1 L1087.2,640.8 L1088.4,637.1 L1089.6,637.6 L1090.7,633.8 L1091.8,638.6 L1092.8,639.4 L1093.9,640.2 L1095.1,638.0 L1096.2,633.9 L1097.4,632.8 L1098.5,627.7 L1099.7,627.0 L1100.8,626.7 L1101.9,625.7 L1103.0,629.4 L1104.8,629.0 L1105.3,537.5 L1106.9,537.5 L1107.6,633.0 L1108.6,634.0 L1109.7,633.0 L1110.7,634.3 L1111.7,633.2 L1112.8,629.2 L1113.8,633.7 L1114.8,632.7 L1115.9,633.8 L1116.9,634.0 L1118.1,629.1 L1119.2,625.3 L1120.4,619.0 L1121.6,623.1 L1122.7,627.0 L1123.7,626.2 L1124.8,625.5 L1125.8,626.5 L1126.8,626.6 L1127.8,626.6 L1128.9,624.6 L1129.9,622.0 L1130.9,624.8 L1132.1,629.2 L1133.2,632.6 L1134.4,635.2 L1135.4,634.7 L1136.5,635.9 L1137.5,635.8 L1138.6,634.1 L1139.6,638.5 L1140.6,635.3 L1141.7,637.9 L1142.7,639.5 L1143.8,638.5 L1144.8,640.0 L1145.9,639.9 L1147.0,639.5 L1148.0,639.5 L1149.1,640.6 L1150.2,641.1 L1151.2,640.6 L1152.3,640.9 L1153.4,639.5 L1154.5,641.7 L1155.5,641.0 L1156.6,642.0 L1157.7,641.0 L1158.8,643.2 L1160.0,646.9 L1161.2,643.1 L1162.3,638.1 L1163.5,631.8 L1164.6,631.0 L1165.6,631.4 L1166.7,632.0 L1167.8,629.9 L1168.8,631.9 L1169.9,631.7 L1171.0,632.0 L1172.1,631.0 L1173.1,628.5 L1174.2,632.8 L1175.3,631.9 L1176.3,632.7 L1177.4,631.8 L1178.6,636.7 L1179.8,640.0 L1181.0,648.0 L1182.2,644.4 L1183.3,641.0 L1184.3,640.3 L1185.4,641.2 L1186.4,640.0 L1187.5,640.5 L1188.5,640.1 L1189.5,640.2 L1190.6,641.2 L1191.6,639.3 L1192.7,641.0 L1193.7,641.0 L1195.0,636.4 L1196.0,635.6 L1197.0,638.1 L1198.0,637.3 L1199.0,636.4 L1200.0,637.4 L1201.0,637.1 L1202.0,638.4 L1203.0,638.7 L1204.2,631.0 L1205.6,629.1 L1207.0,628.5 L1207.6,592.0 L1209.0,589.2 L1210.5,588.0 L1211.4,563.5 L1212.6,563.3 L1214.0,569.5 L1215.5,575.7 L1216.6,575.6 L1217.7,577.6 L1218.7,578.5 L1219.8,578.0 L1221.2,579.5 L1222.6,586.2 L1223.1,594.8 L1224.0,597.6 L1225.0,597.5 L1226.1,597.1 L1227.1,596.7 L1228.1,597.0 L1229.2,597.3 L1230.2,597.6 L1231.5,601.0 L1232.7,603.7 L1234.0,606.0 L1235.0,608.6 L1236.1,609.5 L1237.2,608.9 L1238.2,608.6 L1239.3,607.5 L1240.4,609.8 L1241.4,610.5 L1242.5,610.0 L1243.6,609.5 L1245.5,613.8 L1246.9,611.9 L1248.3,612.4 L1249.5,613.2 L1250.7,611.9 L1251.8,614.1 L1253.0,613.0 L1254.2,618.0 L1255.4,617.8 L1256.6,617.4 L1257.7,616.1 L1258.9,616.6 L1259.6,616.0 L1260.1,484.6 L1261.2,484.6 L1261.8,615.5 L1262.8,613.6 L1263.8,609.9 L1264.9,608.8 L1265.9,606.1 L1266.9,608.0 L1268.0,610.7 L1269.0,614.4 L1270.0,617.3 L1271.1,618.2 L1272.3,619.0 L1273.4,619.0 L1274.2,626.6 L1275.3,625.5 L1276.3,626.6 L1277.4,628.0 L1278.5,629.1 L1280.2,626.6 L1281.2,625.4 L1282.3,625.9 L1283.3,625.9 L1284.3,625.4 L1285.4,625.5 L1286.4,625.1 L1287.4,625.1 L1288.5,623.0 L1289.5,624.9 L1290.6,624.0 L1291.8,621.4 L1292.9,621.5 L1294.0,620.1 L1295.1,624.3 L1296.2,626.6 L1297.3,623.8 L1298.5,621.0 L1299.6,617.3 L1300.7,617.5 L1301.8,616.9 L1302.9,618.4 L1304.0,615.1 L1305.1,618.9 L1306.2,620.7 L1307.3,619.8 L1308.4,619.7 L1309.5,619.4 L1310.6,620.6 L1311.6,619.9 L1312.6,620.4 L1313.7,617.4 L1314.7,616.7 L1315.7,617.3 L1316.8,616.6 L1318.0,612.7 L1319.1,612.2 L1320.1,611.9 L1321.2,612.1 L1322.2,611.8 L1323.3,613.0 L1324.6,615.7 L1325.9,620.6 L1327.6,629.1 L1328.8,623.7 L1330.1,620.6 L1331.8,628.3 L1333.1,627.5 L1334.4,628.3 L1335.5,622.2 L1336.6,622.7 L1337.7,619.8 L1339.4,315.0 L1341.0,310.6 L1342.1,314.8 L1343.1,321.2 L1344.2,326.4 L1345.5,320.4 L1346.8,317.0 L1348.0,310.6 L1349.0,309.2 L1350.0,312.0 L1351.0,311.8 L1352.0,310.6 L1353.4,310.3 L1354.8,310.6 L1356.4,608.8 L1357.4,609.9 L1358.4,608.8 L1359.4,611.3 L1360.4,611.8 L1361.4,613.0 L1363.1,620.6 L1364.8,614.7 L1365.8,616.2 L1366.8,616.4 L1367.9,616.9 L1368.9,616.3 L1369.9,619.0 L1371.1,619.3 L1372.3,620.0 L1373.4,622.0 L1374.6,624.0 L1375.8,624.0 L1376.7,638.4 L1378.0,639.3 L1379.2,641.0 L1380.5,643.6 L1381.8,648.6 L1383.0,657.3 L1384.3,664.7 L1385.3,665.5 L1386.4,664.3 L1387.4,664.5 L1388.4,665.8 L1389.5,664.6 L1390.5,665.8 L1391.5,666.0 L1392.6,665.4 L1393.6,666.4 L1395.3,659.6 L1396.4,661.1 L1397.6,662.9 L1398.7,663.0 L1399.7,662.8 L1400.7,661.2 L1401.8,658.5 L1402.8,659.2 L1403.8,657.0 L1405.0,657.1 L1406.2,656.1 L1407.3,657.6 L1408.5,655.4 L1409.7,656.2 L1410.6,646.9 L1411.7,647.5 L1412.7,645.9 L1413.8,647.2 L1414.8,644.5 L1415.9,645.0 L1416.9,646.4 L1418.0,643.8 L1419.1,644.0 L1420.1,645.5 L1421.2,645.1 L1422.2,643.3 L1423.3,643.5 L1424.5,648.3 L1425.8,652.8 L1427.0,653.8 L1428.3,655.4 L1429.4,654.0 L1430.4,654.8 L1431.5,653.7 L1432.6,652.0 L1433.6,650.2 L1434.7,655.3 L1435.8,656.2 L1436.8,656.2 L1438.5,650.3 L1439.8,651.4 L1441.0,654.5 L1442.0,653.3 L1443.0,653.9 L1444.1,655.7 L1445.1,655.6 L1446.1,654.9 L1447.1,650.5 L1448.1,654.9 L1449.2,653.9 L1450.2,654.7 L1451.2,654.5 L1452.9,649.4 L1453.9,645.5 L1454.9,649.3 L1456.0,647.8 L1457.0,649.7 L1458.0,650.3 L1459.7,638.4 L1460.7,638.4 L1461.7,638.2 L1462.7,638.4 L1463.7,637.5 L1464.7,638.4 L1465.7,638.5 L1466.7,638.7 L1467.7,638.5 L1468.7,638.7 L1469.7,636.2 L1470.7,639.3 L1471.8,638.9 L1472.8,639.4 L1473.9,639.9 L1474.9,638.4 L1476.2,641.9 L1477.5,654.5 L1478.8,644.4 L1478.8,736.6 Z" fill="#cacaca"/>
<line x1="343" y1="285.5" x2="1479" y2="285.5" stroke="rgba(0,0,0,0.018)" stroke-width="1"/>
<line x1="343" y1="361.5" x2="1479" y2="361.5" stroke="rgba(0,0,0,0.018)" stroke-width="1"/>
<line x1="343" y1="436.5" x2="1479" y2="436.5" stroke="rgba(0,0,0,0.018)" stroke-width="1"/>
<line x1="343" y1="511.5" x2="1479" y2="511.5" stroke="rgba(0,0,0,0.018)" stroke-width="1"/>
<line x1="343" y1="587.5" x2="1479" y2="587.5" stroke="rgba(0,0,0,0.018)" stroke-width="1"/>
<line x1="343" y1="662.5" x2="1479" y2="662.5" stroke="rgba(0,0,0,0.018)" stroke-width="1"/>
<defs><clipPath id="negclip"><rect x="300" y="736.9" width="1200" height="40"/></clipPath></defs>
<path d="M343.0,736.6 L343.0,636.0 L344.0,635.4 L345.0,634.9 L346.0,632.8 L347.0,629.1 L348.0,632.6 L349.1,634.2 L350.2,634.1 L351.3,633.9 L352.4,634.2 L353.5,634.2 L354.6,634.4 L355.2,642.3 L356.3,642.7 L357.4,639.1 L358.4,641.1 L359.5,642.2 L360.6,643.3 L361.6,643.4 L362.7,643.1 L363.8,642.3 L365.1,641.4 L366.5,638.3 L367.6,637.1 L368.7,637.2 L369.7,637.6 L370.8,637.1 L371.9,637.1 L373.0,637.5 L374.1,638.1 L375.2,638.0 L376.2,638.0 L377.3,635.7 L378.4,636.4 L379.4,637.4 L380.5,636.2 L381.5,635.0 L382.6,635.8 L383.6,634.3 L384.7,636.5 L385.7,635.0 L387.0,622.5 L388.0,617.9 L389.0,620.2 L390.0,620.8 L391.0,614.7 L392.0,617.6 L393.0,617.2 L394.0,618.8 L395.1,619.2 L396.1,617.2 L397.2,617.5 L398.2,618.8 L399.3,618.5 L400.3,619.8 L401.0,629.0 L402.1,624.3 L403.3,628.9 L404.4,627.2 L405.5,627.1 L406.6,626.4 L407.8,626.8 L408.9,625.1 L409.9,624.7 L410.9,623.9 L411.9,625.6 L413.0,624.2 L414.0,621.5 L415.0,620.9 L416.0,620.2 L417.0,622.7 L418.0,623.4 L419.1,621.4 L420.1,621.7 L421.1,622.3 L422.1,621.8 L423.1,621.4 L424.2,621.3 L425.2,621.0 L426.2,622.2 L427.3,619.1 L428.3,620.6 L429.3,620.6 L430.4,621.0 L431.4,621.1 L432.7,611.2 L433.7,610.0 L434.8,610.5 L435.8,610.6 L436.8,609.8 L437.9,610.9 L438.9,610.2 L439.9,609.2 L441.0,609.2 L442.0,609.9 L443.3,618.5 L444.4,619.4 L445.5,617.9 L446.5,618.9 L447.6,618.1 L448.7,618.0 L449.8,617.9 L450.9,618.3 L452.0,618.3 L453.0,617.6 L454.1,615.6 L455.2,618.5 L456.6,621.8 L457.6,621.7 L458.6,623.0 L459.6,622.6 L460.6,622.4 L461.7,621.5 L462.7,621.3 L463.7,618.6 L464.7,620.9 L465.7,622.7 L466.7,623.2 L467.7,622.5 L468.7,618.1 L469.8,622.8 L470.8,622.2 L471.8,622.7 L472.8,621.8 L473.8,622.5 L474.8,617.4 L475.8,612.5 L476.9,612.1 L477.9,612.6 L479.0,611.6 L480.1,613.6 L481.2,613.3 L482.2,610.4 L483.3,609.7 L484.4,612.5 L485.4,616.6 L486.4,621.1 L487.5,620.3 L488.6,615.4 L489.7,616.5 L490.8,617.1 L491.9,621.0 L493.0,621.8 L494.1,618.3 L495.2,621.0 L496.3,621.4 L497.4,620.1 L498.5,619.7 L499.6,621.0 L500.7,619.2 L501.8,619.7 L502.9,619.8 L503.9,616.2 L504.9,611.2 L505.9,616.3 L506.9,619.8 L507.9,619.4 L508.9,619.4 L509.9,619.1 L510.9,619.1 L511.5,606.6 L512.5,606.7 L513.5,607.0 L514.5,606.0 L515.5,607.1 L516.5,608.5 L517.5,608.6 L518.5,607.1 L519.5,607.9 L520.1,616.5 L521.2,615.4 L522.2,616.7 L523.3,616.9 L524.3,616.6 L525.4,614.8 L526.5,614.4 L527.5,616.3 L528.6,612.7 L529.6,614.5 L530.7,615.2 L531.7,610.7 L532.8,615.8 L533.8,616.6 L534.8,616.3 L535.9,612.3 L536.9,614.7 L537.9,617.0 L539.0,613.8 L540.0,616.0 L541.1,615.3 L542.1,615.3 L543.2,616.6 L544.2,615.6 L545.3,615.5 L546.4,614.8 L547.4,617.1 L548.5,616.5 L549.5,616.3 L550.6,615.8 L551.9,631.7 L552.9,627.8 L553.9,623.0 L554.9,623.2 L555.9,624.5 L556.9,622.7 L557.9,625.1 L558.9,624.1 L559.9,623.7 L560.9,624.0 L561.9,625.0 L563.2,621.0 L564.5,631.0 L565.5,631.5 L566.5,633.0 L567.8,639.6 L568.8,638.9 L569.8,636.8 L570.8,635.9 L571.8,635.0 L572.8,636.2 L573.8,636.2 L574.8,634.9 L575.8,638.9 L577.1,637.0 L578.4,636.5 L579.7,634.3 L580.7,635.6 L581.7,634.6 L582.7,635.2 L583.7,634.4 L584.7,634.9 L585.7,634.3 L586.8,635.8 L587.9,639.0 L589.0,639.6 L590.0,638.8 L591.1,640.0 L592.1,640.6 L593.1,638.6 L594.2,638.6 L595.2,639.7 L596.2,640.1 L597.3,639.9 L598.3,638.9 L599.6,625.0 L600.6,624.9 L601.7,624.1 L602.7,621.1 L603.7,625.5 L604.8,624.1 L605.8,625.3 L606.8,624.8 L607.9,626.8 L608.9,625.7 L610.0,626.9 L611.1,626.1 L612.2,629.0 L613.2,631.3 L614.2,638.9 L615.3,634.5 L616.3,639.0 L617.4,638.6 L618.4,638.7 L619.5,637.6 L620.5,634.3 L621.5,629.7 L622.8,637.0 L623.9,637.7 L625.0,636.4 L626.1,637.2 L627.2,638.3 L628.3,637.2 L629.4,638.6 L630.5,639.5 L631.6,637.7 L632.7,638.9 L633.8,637.8 L634.9,639.2 L635.9,638.7 L637.0,638.3 L638.1,637.5 L639.2,635.6 L640.3,638.7 L641.4,637.3 L642.4,638.8 L643.5,634.3 L644.6,637.6 L646.0,630.3 L647.3,623.7 L648.4,623.2 L649.5,624.0 L650.6,624.0 L651.7,619.6 L652.8,619.8 L653.9,622.4 L654.9,623.2 L655.9,625.7 L656.9,625.0 L657.9,623.0 L659.0,627.0 L660.1,628.7 L661.2,633.0 L662.4,631.5 L663.5,631.8 L664.6,630.3 L665.8,630.3 L667.1,631.1 L668.5,634.3 L669.5,635.0 L670.5,633.3 L671.5,633.5 L672.5,633.0 L673.6,632.9 L674.7,629.8 L675.8,629.0 L677.1,605.2 L678.2,606.9 L679.3,609.3 L680.4,610.5 L681.5,606.6 L682.6,608.8 L683.7,607.8 L684.8,610.3 L685.9,613.2 L687.0,617.7 L688.3,611.8 L689.5,613.0 L690.6,613.6 L691.8,615.2 L693.0,615.0 L694.3,607.2 L695.4,608.1 L696.6,606.3 L697.8,607.0 L698.9,607.8 L700.3,615.8 L701.3,614.2 L702.4,616.9 L703.4,615.1 L704.4,616.4 L705.4,616.8 L706.5,615.9 L707.5,616.4 L708.5,622.2 L709.5,625.7 L710.6,625.5 L711.6,625.7 L712.7,623.0 L713.7,624.8 L714.8,625.7 L715.9,626.9 L716.9,626.8 L718.0,627.2 L719.0,629.0 L720.1,629.0 L721.1,627.8 L722.1,628.9 L723.1,627.7 L724.1,628.0 L725.1,626.1 L726.1,627.8 L727.1,626.6 L728.1,626.4 L729.2,623.4 L730.3,621.7 L731.4,619.7 L732.4,618.3 L733.4,617.3 L734.4,617.4 L735.4,619.4 L736.4,615.8 L737.4,618.4 L738.7,611.2 L740.0,609.7 L741.3,610.7 L742.4,609.5 L743.5,607.9 L744.5,607.6 L745.6,607.3 L746.7,606.5 L747.8,607.1 L748.8,608.2 L749.9,610.3 L750.9,610.0 L752.0,613.5 L753.0,613.4 L754.4,619.8 L755.7,628.7 L756.7,625.8 L757.7,626.8 L758.7,626.9 L759.8,627.3 L760.8,628.1 L761.8,625.5 L762.8,626.6 L763.8,626.0 L764.9,624.7 L766.0,626.4 L767.0,622.3 L768.1,626.0 L769.2,625.3 L770.3,625.3 L771.4,625.2 L772.4,623.6 L773.5,624.3 L774.6,623.3 L775.6,623.4 L776.7,625.2 L777.8,625.9 L778.8,626.0 L779.9,627.2 L780.9,625.4 L782.0,627.0 L783.0,629.6 L784.1,630.4 L785.1,629.9 L786.2,631.3 L787.2,631.4 L788.3,628.7 L789.4,625.4 L790.4,620.4 L791.5,618.2 L792.6,619.7 L793.7,620.5 L794.8,623.1 L795.8,627.9 L796.9,629.2 L798.0,631.4 L799.1,630.5 L800.2,629.0 L801.3,625.8 L802.4,625.0 L803.5,626.4 L804.7,629.0 L805.9,627.8 L807.0,635.0 L808.0,636.2 L809.0,638.9 L810.0,642.2 L811.0,644.8 L812.0,646.0 L813.0,648.6 L814.0,651.0 L815.0,650.8 L816.1,656.4 L817.1,660.2 L818.2,662.3 L819.2,666.5 L820.3,667.3 L821.3,672.7 L822.7,677.0 L823.8,679.9 L824.9,681.3 L825.9,685.8 L827.0,687.0 L828.0,688.8 L829.0,688.1 L830.0,693.6 L831.0,695.0 L832.1,697.1 L833.2,697.8 L834.3,697.3 L835.4,698.4 L836.7,695.6 L838.0,690.8 L839.0,687.2 L840.0,683.4 L841.0,681.1 L842.0,676.4 L843.8,673.8 L845.5,668.8 L847.2,677.0 L848.5,670.6 L849.8,662.0 L851.0,664.7 L852.3,669.6 L853.3,665.8 L854.3,663.5 L855.4,656.0 L856.4,656.3 L857.4,653.5 L859.0,663.7 L860.2,668.6 L861.3,671.1 L862.5,676.4 L864.0,665.4 L865.0,664.3 L866.0,662.5 L867.0,664.1 L868.0,663.0 L869.0,660.3 L870.0,660.3 L871.1,659.4 L872.2,658.8 L873.3,658.8 L874.5,657.0 L875.6,657.0 L876.7,654.8 L877.8,653.3 L878.9,653.8 L880.0,653.4 L881.1,652.1 L882.1,651.2 L883.2,653.3 L884.3,652.9 L885.4,651.2 L887.0,670.0 L888.5,700.0 L890.0,730.0 L891.5,746.0 L893.0,738.0 L894.1,731.3 L895.2,725.6 L896.3,719.7 L897.3,715.1 L898.3,716.0 L899.5,735.0 L900.4,747.5 L902.0,723.0 L903.0,735.0 L904.5,744.0 L906.0,738.0 L907.8,734.4 L909.0,732.6 L910.2,731.1 L911.5,729.1 L912.7,727.9 L913.9,724.0 L915.2,720.6 L916.4,714.9 L917.6,711.5 L919.0,730.0 L920.5,742.6 L922.0,736.0 L922.5,696.7 L923.6,695.7 L924.7,693.5 L925.8,691.9 L926.8,689.3 L927.9,686.5 L929.0,686.9 L930.0,685.8 L931.0,686.1 L932.0,684.2 L933.0,683.0 L934.0,682.0 L935.1,680.4 L936.2,681.7 L937.2,679.4 L938.3,678.7 L939.4,678.0 L940.6,673.4 L941.8,668.2 L943.0,664.6 L944.2,669.1 L945.3,674.4 L946.5,678.0 L947.6,679.9 L948.7,678.3 L949.8,680.3 L950.9,680.4 L952.0,681.7 L953.0,682.8 L954.1,678.2 L955.1,682.7 L956.2,682.1 L957.2,682.8 L958.2,681.4 L959.3,681.2 L960.3,682.9 L961.4,681.2 L962.4,681.1 L963.5,681.1 L964.5,681.7 L965.6,678.5 L966.7,676.8 L967.8,673.3 L968.9,673.8 L970.0,670.1 L971.1,669.3 L972.2,672.3 L973.2,673.0 L974.3,664.2 L975.4,659.9 L976.4,652.3 L977.5,646.6 L978.6,647.7 L979.6,647.9 L980.7,647.0 L981.7,645.4 L982.8,645.8 L983.8,647.4 L984.9,645.4 L985.9,646.7 L987.0,645.6 L988.0,647.9 L989.1,645.6 L990.1,645.6 L991.2,646.6 L992.3,663.5 L993.6,660.3 L994.9,655.0 L996.1,652.4 L997.3,652.8 L998.5,649.4 L999.7,648.1 L1001.0,646.2 L1002.3,644.4 L1003.3,646.6 L1004.4,649.7 L1005.5,647.3 L1006.5,648.5 L1007.6,647.7 L1008.7,647.0 L1009.7,645.4 L1010.8,645.5 L1011.9,646.6 L1012.9,644.7 L1014.0,645.5 L1015.2,648.3 L1016.3,648.7 L1017.5,650.0 L1018.6,652.9 L1019.8,655.0 L1020.8,652.7 L1021.9,649.4 L1023.0,651.5 L1024.0,649.7 L1025.1,636.0 L1026.2,637.2 L1027.2,634.0 L1028.3,637.8 L1029.3,638.1 L1030.4,638.6 L1031.4,644.4 L1032.6,641.7 L1033.7,640.2 L1034.9,638.9 L1036.0,636.4 L1037.2,633.3 L1038.8,645.5 L1040.0,645.3 L1041.3,641.7 L1042.5,641.3 L1043.6,645.6 L1044.7,648.7 L1045.8,646.4 L1046.8,643.4 L1047.8,645.9 L1048.9,646.0 L1050.0,648.3 L1051.0,648.7 L1052.0,647.7 L1053.1,646.6 L1054.2,646.1 L1055.2,643.3 L1056.3,643.1 L1057.3,643.1 L1058.4,642.3 L1059.5,641.9 L1060.5,640.8 L1061.6,640.2 L1062.7,640.5 L1063.7,639.2 L1064.8,639.3 L1065.8,639.7 L1066.9,639.3 L1067.9,638.1 L1069.0,638.6 L1070.3,633.6 L1071.6,628.0 L1072.6,627.5 L1073.6,628.6 L1074.6,628.0 L1075.6,631.0 L1076.6,631.9 L1077.6,631.4 L1078.6,631.2 L1079.6,632.8 L1080.8,632.0 L1082.1,632.7 L1083.3,631.2 L1084.9,643.4 L1086.1,641.1 L1087.2,640.8 L1088.4,637.1 L1089.6,637.6 L1090.7,633.8 L1091.8,638.6 L1092.8,639.4 L1093.9,640.2 L1095.1,638.0 L1096.2,633.9 L1097.4,632.8 L1098.5,627.7 L1099.7,627.0 L1100.8,626.7 L1101.9,625.7 L1103.0,629.4 L1104.8,629.0 L1105.3,537.5 L1106.9,537.5 L1107.6,633.0 L1108.6,634.0 L1109.7,633.0 L1110.7,634.3 L1111.7,633.2 L1112.8,629.2 L1113.8,633.7 L1114.8,632.7 L1115.9,633.8 L1116.9,634.0 L1118.1,629.1 L1119.2,625.3 L1120.4,619.0 L1121.6,623.1 L1122.7,627.0 L1123.7,626.2 L1124.8,625.5 L1125.8,626.5 L1126.8,626.6 L1127.8,626.6 L1128.9,624.6 L1129.9,622.0 L1130.9,624.8 L1132.1,629.2 L1133.2,632.6 L1134.4,635.2 L1135.4,634.7 L1136.5,635.9 L1137.5,635.8 L1138.6,634.1 L1139.6,638.5 L1140.6,635.3 L1141.7,637.9 L1142.7,639.5 L1143.8,638.5 L1144.8,640.0 L1145.9,639.9 L1147.0,639.5 L1148.0,639.5 L1149.1,640.6 L1150.2,641.1 L1151.2,640.6 L1152.3,640.9 L1153.4,639.5 L1154.5,641.7 L1155.5,641.0 L1156.6,642.0 L1157.7,641.0 L1158.8,643.2 L1160.0,646.9 L1161.2,643.1 L1162.3,638.1 L1163.5,631.8 L1164.6,631.0 L1165.6,631.4 L1166.7,632.0 L1167.8,629.9 L1168.8,631.9 L1169.9,631.7 L1171.0,632.0 L1172.1,631.0 L1173.1,628.5 L1174.2,632.8 L1175.3,631.9 L1176.3,632.7 L1177.4,631.8 L1178.6,636.7 L1179.8,640.0 L1181.0,648.0 L1182.2,644.4 L1183.3,641.0 L1184.3,640.3 L1185.4,641.2 L1186.4,640.0 L1187.5,640.5 L1188.5,640.1 L1189.5,640.2 L1190.6,641.2 L1191.6,639.3 L1192.7,641.0 L1193.7,641.0 L1195.0,636.4 L1196.0,635.6 L1197.0,638.1 L1198.0,637.3 L1199.0,636.4 L1200.0,637.4 L1201.0,637.1 L1202.0,638.4 L1203.0,638.7 L1204.2,631.0 L1205.6,629.1 L1207.0,628.5 L1207.6,592.0 L1209.0,589.2 L1210.5,588.0 L1211.4,563.5 L1212.6,563.3 L1214.0,569.5 L1215.5,575.7 L1216.6,575.6 L1217.7,577.6 L1218.7,578.5 L1219.8,578.0 L1221.2,579.5 L1222.6,586.2 L1223.1,594.8 L1224.0,597.6 L1225.0,597.5 L1226.1,597.1 L1227.1,596.7 L1228.1,597.0 L1229.2,597.3 L1230.2,597.6 L1231.5,601.0 L1232.7,603.7 L1234.0,606.0 L1235.0,608.6 L1236.1,609.5 L1237.2,608.9 L1238.2,608.6 L1239.3,607.5 L1240.4,609.8 L1241.4,610.5 L1242.5,610.0 L1243.6,609.5 L1245.5,613.8 L1246.9,611.9 L1248.3,612.4 L1249.5,613.2 L1250.7,611.9 L1251.8,614.1 L1253.0,613.0 L1254.2,618.0 L1255.4,617.8 L1256.6,617.4 L1257.7,616.1 L1258.9,616.6 L1259.6,616.0 L1260.1,484.6 L1261.2,484.6 L1261.8,615.5 L1262.8,613.6 L1263.8,609.9 L1264.9,608.8 L1265.9,606.1 L1266.9,608.0 L1268.0,610.7 L1269.0,614.4 L1270.0,617.3 L1271.1,618.2 L1272.3,619.0 L1273.4,619.0 L1274.2,626.6 L1275.3,625.5 L1276.3,626.6 L1277.4,628.0 L1278.5,629.1 L1280.2,626.6 L1281.2,625.4 L1282.3,625.9 L1283.3,625.9 L1284.3,625.4 L1285.4,625.5 L1286.4,625.1 L1287.4,625.1 L1288.5,623.0 L1289.5,624.9 L1290.6,624.0 L1291.8,621.4 L1292.9,621.5 L1294.0,620.1 L1295.1,624.3 L1296.2,626.6 L1297.3,623.8 L1298.5,621.0 L1299.6,617.3 L1300.7,617.5 L1301.8,616.9 L1302.9,618.4 L1304.0,615.1 L1305.1,618.9 L1306.2,620.7 L1307.3,619.8 L1308.4,619.7 L1309.5,619.4 L1310.6,620.6 L1311.6,619.9 L1312.6,620.4 L1313.7,617.4 L1314.7,616.7 L1315.7,617.3 L1316.8,616.6 L1318.0,612.7 L1319.1,612.2 L1320.1,611.9 L1321.2,612.1 L1322.2,611.8 L1323.3,613.0 L1324.6,615.7 L1325.9,620.6 L1327.6,629.1 L1328.8,623.7 L1330.1,620.6 L1331.8,628.3 L1333.1,627.5 L1334.4,628.3 L1335.5,622.2 L1336.6,622.7 L1337.7,619.8 L1339.4,315.0 L1341.0,310.6 L1342.1,314.8 L1343.1,321.2 L1344.2,326.4 L1345.5,320.4 L1346.8,317.0 L1348.0,310.6 L1349.0,309.2 L1350.0,312.0 L1351.0,311.8 L1352.0,310.6 L1353.4,310.3 L1354.8,310.6 L1356.4,608.8 L1357.4,609.9 L1358.4,608.8 L1359.4,611.3 L1360.4,611.8 L1361.4,613.0 L1363.1,620.6 L1364.8,614.7 L1365.8,616.2 L1366.8,616.4 L1367.9,616.9 L1368.9,616.3 L1369.9,619.0 L1371.1,619.3 L1372.3,620.0 L1373.4,622.0 L1374.6,624.0 L1375.8,624.0 L1376.7,638.4 L1378.0,639.3 L1379.2,641.0 L1380.5,643.6 L1381.8,648.6 L1383.0,657.3 L1384.3,664.7 L1385.3,665.5 L1386.4,664.3 L1387.4,664.5 L1388.4,665.8 L1389.5,664.6 L1390.5,665.8 L1391.5,666.0 L1392.6,665.4 L1393.6,666.4 L1395.3,659.6 L1396.4,661.1 L1397.6,662.9 L1398.7,663.0 L1399.7,662.8 L1400.7,661.2 L1401.8,658.5 L1402.8,659.2 L1403.8,657.0 L1405.0,657.1 L1406.2,656.1 L1407.3,657.6 L1408.5,655.4 L1409.7,656.2 L1410.6,646.9 L1411.7,647.5 L1412.7,645.9 L1413.8,647.2 L1414.8,644.5 L1415.9,645.0 L1416.9,646.4 L1418.0,643.8 L1419.1,644.0 L1420.1,645.5 L1421.2,645.1 L1422.2,643.3 L1423.3,643.5 L1424.5,648.3 L1425.8,652.8 L1427.0,653.8 L1428.3,655.4 L1429.4,654.0 L1430.4,654.8 L1431.5,653.7 L1432.6,652.0 L1433.6,650.2 L1434.7,655.3 L1435.8,656.2 L1436.8,656.2 L1438.5,650.3 L1439.8,651.4 L1441.0,654.5 L1442.0,653.3 L1443.0,653.9 L1444.1,655.7 L1445.1,655.6 L1446.1,654.9 L1447.1,650.5 L1448.1,654.9 L1449.2,653.9 L1450.2,654.7 L1451.2,654.5 L1452.9,649.4 L1453.9,645.5 L1454.9,649.3 L1456.0,647.8 L1457.0,649.7 L1458.0,650.3 L1459.7,638.4 L1460.7,638.4 L1461.7,638.2 L1462.7,638.4 L1463.7,637.5 L1464.7,638.4 L1465.7,638.5 L1466.7,638.7 L1467.7,638.5 L1468.7,638.7 L1469.7,636.2 L1470.7,639.3 L1471.8,638.9 L1472.8,639.4 L1473.9,639.9 L1474.9,638.4 L1476.2,641.9 L1477.5,654.5 L1478.8,644.4 L1478.8,736.6 Z" fill="#9c9c9c" clip-path="url(#negclip)"/>
<path d="M343.0,736.6 L343.0,736.6 L344.0,736.6 L345.0,736.6 L346.0,736.6 L347.0,736.6 L348.0,736.6 L349.0,736.6 L350.0,736.6 L351.0,736.6 L352.0,736.6 L353.0,736.6 L354.0,736.6 L355.0,736.6 L356.0,736.6 L357.0,736.6 L358.0,736.6 L359.0,736.6 L360.0,736.6 L361.0,736.6 L362.0,736.6 L363.0,736.6 L364.0,736.6 L365.0,736.6 L366.0,736.6 L367.0,736.6 L368.0,736.6 L369.0,736.6 L370.0,736.6 L371.0,736.6 L372.0,736.6 L373.0,736.6 L374.0,736.6 L375.0,736.6 L376.0,736.6 L377.1,736.6 L378.1,736.6 L379.1,736.6 L380.1,736.6 L381.1,736.6 L382.1,736.6 L383.1,736.6 L384.1,736.6 L385.1,736.6 L386.1,736.6 L387.1,736.6 L388.1,736.6 L389.1,736.6 L390.1,736.6 L391.1,736.6 L392.1,736.6 L393.1,736.6 L394.1,736.6 L395.1,736.6 L396.1,736.6 L397.1,736.6 L398.1,736.6 L399.1,736.6 L400.1,736.6 L401.1,736.6 L402.1,736.6 L403.1,736.6 L404.1,736.6 L405.1,736.6 L406.1,736.6 L407.1,736.6 L408.1,736.6 L409.1,736.6 L410.1,736.6 L411.1,736.6 L412.1,736.6 L413.1,736.6 L414.1,736.6 L415.1,736.6 L416.1,736.6 L417.1,736.6 L418.1,736.6 L419.1,736.6 L420.1,736.6 L421.1,736.6 L422.1,736.6 L423.1,736.6 L424.1,736.6 L425.1,736.6 L426.1,736.6 L427.1,736.6 L428.1,736.6 L429.1,736.6 L430.1,736.6 L431.1,736.6 L432.1,736.6 L433.1,736.6 L434.1,736.6 L435.1,736.6 L436.1,736.6 L437.1,736.6 L438.1,736.6 L439.1,736.6 L440.1,736.6 L441.1,736.6 L442.1,736.6 L443.1,736.6 L444.1,736.6 L445.2,736.6 L446.2,736.6 L447.2,736.6 L448.2,736.6 L449.2,736.6 L450.2,736.6 L451.2,736.6 L452.2,736.6 L453.2,736.6 L454.2,736.6 L455.2,736.6 L456.2,736.6 L457.2,736.6 L458.2,736.6 L459.2,736.6 L460.2,736.6 L461.2,736.6 L462.2,736.6 L463.2,736.6 L464.2,736.6 L465.2,736.6 L466.2,736.6 L467.2,736.6 L468.2,736.6 L469.2,736.6 L470.2,736.6 L471.2,736.6 L472.2,736.6 L473.2,736.6 L474.2,736.6 L475.2,736.6 L476.2,736.6 L477.2,736.6 L478.2,736.6 L479.2,736.6 L480.2,736.6 L481.2,736.6 L482.2,736.6 L483.2,736.6 L484.2,736.6 L485.2,736.6 L486.2,736.6 L487.2,736.6 L488.2,736.6 L489.2,736.6 L490.2,736.6 L491.2,736.6 L492.2,736.6 L493.2,736.6 L494.2,736.6 L495.2,736.6 L496.2,736.6 L497.2,736.6 L498.2,736.6 L499.2,736.6 L500.2,736.6 L501.2,736.6 L502.2,736.6 L503.2,736.6 L504.2,736.6 L505.2,736.6 L506.2,736.6 L507.2,736.6 L508.2,736.6 L509.2,736.6 L510.2,736.6 L511.2,736.6 L512.3,736.6 L513.3,736.6 L514.3,736.6 L515.3,736.6 L516.3,736.6 L517.3,736.6 L518.3,736.6 L519.3,736.6 L520.3,736.6 L521.3,736.6 L522.3,736.6 L523.3,736.6 L524.3,736.6 L525.3,736.6 L526.3,736.6 L527.3,736.6 L528.3,736.6 L529.3,736.6 L530.3,736.6 L531.3,736.6 L532.3,736.6 L533.3,736.6 L534.3,736.6 L535.3,736.6 L536.3,736.6 L537.3,736.6 L538.3,736.6 L539.3,736.6 L540.3,736.6 L541.3,736.6 L542.3,736.6 L543.3,736.6 L544.3,736.6 L545.3,736.6 L546.3,736.6 L547.3,736.6 L548.3,736.6 L549.3,736.6 L550.3,736.6 L551.3,736.6 L552.3,736.6 L553.3,736.6 L554.3,736.6 L555.3,736.6 L556.3,736.6 L557.3,736.6 L558.3,736.6 L559.3,736.6 L560.3,736.6 L561.3,736.6 L562.3,736.6 L563.3,736.6 L564.3,736.6 L565.3,736.6 L566.3,736.6 L567.3,736.6 L568.3,736.6 L569.3,736.6 L570.3,736.6 L571.3,736.6 L572.3,736.6 L573.3,736.6 L574.3,736.6 L575.3,736.6 L576.3,736.6 L577.3,736.6 L578.3,736.6 L579.4,736.6 L580.4,736.6 L581.4,736.6 L582.4,736.6 L583.4,736.6 L584.4,736.6 L585.4,736.6 L586.4,736.6 L587.4,736.6 L588.4,736.6 L589.4,736.6 L590.4,736.6 L591.4,736.6 L592.4,736.6 L593.4,736.6 L594.4,736.6 L595.4,736.6 L596.4,736.6 L597.4,736.6 L598.4,736.6 L599.4,736.6 L600.4,736.6 L601.4,736.6 L602.4,736.6 L603.4,736.6 L604.4,736.6 L605.4,736.6 L606.4,736.6 L607.4,736.6 L608.4,736.6 L609.4,736.6 L610.4,736.6 L611.4,736.6 L612.4,736.6 L613.4,736.6 L614.4,736.6 L615.4,736.6 L616.4,736.6 L617.4,736.6 L618.4,736.6 L619.4,736.6 L620.4,736.6 L621.4,736.6 L622.4,736.6 L623.4,736.6 L624.4,736.6 L625.4,736.6 L626.4,736.6 L627.4,736.6 L628.4,736.6 L629.4,736.6 L630.4,736.6 L631.4,736.6 L632.4,736.6 L633.4,736.6 L634.4,736.6 L635.4,736.6 L636.4,736.6 L637.4,736.6 L638.4,736.6 L639.4,736.6 L640.4,736.6 L641.4,736.6 L642.4,736.6 L643.4,736.6 L644.4,736.6 L645.4,736.6 L646.5,736.6 L647.5,736.6 L648.5,736.6 L649.5,736.6 L650.5,736.6 L651.5,736.6 L652.5,736.6 L653.5,736.6 L654.5,736.6 L655.5,736.6 L656.5,736.6 L657.5,736.6 L658.5,736.6 L659.5,736.6 L660.5,736.6 L661.5,736.6 L662.5,736.6 L663.5,736.6 L664.5,736.6 L665.5,736.6 L666.5,736.6 L667.5,736.6 L668.5,736.6 L669.5,736.6 L670.5,736.6 L671.5,736.6 L672.5,736.6 L673.5,736.6 L674.5,736.6 L675.5,736.6 L676.5,736.6 L677.5,736.6 L678.5,736.6 L679.5,736.6 L680.5,736.6 L681.5,736.6 L682.5,736.6 L683.5,736.6 L684.5,736.6 L685.5,736.6 L686.5,736.6 L687.5,736.6 L688.5,736.6 L689.5,736.6 L690.5,736.6 L691.5,736.6 L692.5,736.6 L693.5,736.6 L694.5,736.6 L695.5,736.6 L696.5,736.6 L697.5,736.6 L698.5,736.6 L699.5,736.6 L700.5,736.6 L701.5,736.6 L702.5,736.6 L703.5,736.6 L704.5,736.6 L705.5,736.6 L706.5,736.6 L707.5,736.6 L708.5,736.6 L709.5,736.6 L710.5,736.6 L711.5,736.6 L712.5,736.6 L713.5,736.6 L714.6,736.6 L715.6,736.6 L716.6,736.6 L717.6,736.6 L718.6,736.6 L719.6,736.6 L720.6,736.6 L721.6,736.6 L722.6,736.6 L723.6,736.6 L724.6,736.6 L725.6,736.6 L726.6,736.6 L727.6,736.6 L728.6,736.6 L729.6,736.6 L730.6,736.6 L731.6,736.6 L732.6,736.6 L733.6,736.6 L734.6,736.6 L735.6,736.6 L736.6,736.6 L737.6,736.6 L738.6,736.6 L739.6,736.6 L740.6,736.6 L741.6,736.6 L742.6,736.6 L743.6,736.6 L744.6,736.6 L745.6,736.6 L746.6,736.6 L747.6,736.6 L748.5,733.0 L749.5,731.6 L750.5,730.2 L751.5,729.2 L752.5,726.8 L753.6,726.3 L754.6,724.9 L755.6,723.9 L756.6,723.0 L757.8,723.9 L759.0,723.5 L760.2,724.0 L761.3,723.7 L762.4,724.3 L763.4,724.4 L764.5,725.4 L765.6,725.4 L766.7,725.5 L767.8,725.4 L768.8,725.6 L769.9,726.2 L771.0,726.7 L772.1,726.4 L773.2,726.5 L774.2,725.6 L775.3,725.6 L776.4,725.6 L777.5,725.6 L778.6,724.1 L779.6,724.5 L780.7,723.3 L781.8,724.0 L782.8,723.9 L783.8,723.1 L784.8,722.3 L785.8,722.1 L786.8,721.0 L787.8,719.7 L788.8,720.0 L789.8,719.8 L790.8,718.6 L791.8,717.4 L792.8,715.6 L793.8,714.9 L794.8,713.9 L795.8,713.0 L796.8,713.3 L797.8,709.4 L798.8,710.5 L799.9,712.5 L801.0,712.8 L802.2,714.3 L803.3,716.0 L804.5,716.2 L805.8,714.0 L807.0,714.0 L808.0,711.4 L809.0,710.0 L810.0,707.7 L811.0,703.7 L812.0,701.4 L813.0,699.5 L814.0,695.6 L815.0,692.5 L816.2,692.3 L817.3,688.2 L818.5,690.8 L819.5,688.3 L820.5,684.5 L821.5,677.7 L822.5,675.9 L823.5,675.5 L824.5,673.8 L825.5,671.2 L826.5,672.1 L827.5,672.4 L828.5,670.8 L829.5,670.5 L830.7,660.7 L832.0,661.7 L833.2,663.9 L834.5,664.5 L836.2,660.7 L837.5,664.3 L838.8,668.0 L840.0,664.4 L841.3,662.4 L842.6,678.0 L843.8,675.3 L844.9,677.6 L846.1,674.6 L847.2,678.5 L849.0,690.8 L850.2,692.1 L851.5,693.3 L852.8,695.7 L854.0,701.8 L855.1,701.9 L856.3,701.0 L857.4,701.0 L859.0,699.2 L860.0,696.7 L861.0,693.6 L862.0,690.0 L863.0,694.4 L864.0,700.0 L865.2,701.8 L866.3,702.3 L867.5,702.6 L868.8,702.9 L870.0,702.2 L871.0,701.5 L872.0,699.7 L873.0,697.2 L874.0,700.1 L875.0,698.4 L876.0,699.9 L877.0,700.6 L878.0,699.8 L879.0,700.4 L880.0,701.6 L881.2,700.2 L882.4,699.0 L883.6,697.0 L884.8,695.0 L885.9,691.5 L887.0,690.4 L888.1,686.9 L889.4,660.4 L890.6,632.8 L892.2,609.8 L893.5,614.9 L894.7,621.3 L895.8,628.1 L896.9,636.4 L898.0,642.6 L899.2,630.1 L900.4,618.0 L902.0,646.0 L903.1,634.9 L904.2,623.0 L906.1,634.4 L907.1,635.7 L908.2,639.3 L909.2,639.8 L910.2,642.6 L911.2,644.9 L912.2,644.9 L913.2,645.8 L914.2,644.3 L915.2,649.2 L916.3,652.8 L917.3,655.4 L918.4,657.4 L919.4,649.8 L920.5,643.0 L921.5,636.6 L922.5,629.5 L923.6,633.7 L924.7,639.1 L925.8,642.6 L926.9,649.1 L928.0,656.5 L929.1,662.3 L930.3,665.6 L931.5,667.2 L932.8,668.6 L934.0,672.0 L935.1,673.6 L936.2,672.3 L937.3,678.7 L938.4,681.3 L939.5,682.7 L940.6,685.2 L941.7,686.1 L942.8,686.1 L943.9,687.2 L945.0,688.5 L946.0,689.5 L947.0,689.5 L948.1,690.6 L949.1,690.5 L950.1,690.7 L951.3,688.5 L952.5,686.3 L953.8,684.1 L955.0,682.0 L956.0,682.5 L957.0,683.1 L958.0,682.4 L959.0,683.1 L960.0,681.7 L961.0,682.6 L962.0,683.2 L963.0,684.6 L964.0,687.4 L965.1,687.6 L966.1,690.0 L967.1,691.9 L968.1,692.5 L969.3,694.3 L970.5,697.1 L971.7,699.7 L972.7,702.2 L973.7,702.0 L974.7,704.2 L975.7,705.1 L976.7,707.6 L977.7,705.9 L978.7,708.4 L979.7,710.8 L980.7,713.2 L981.7,713.6 L982.8,712.2 L983.8,711.9 L984.9,712.2 L985.9,712.4 L987.0,713.1 L988.0,712.3 L989.0,712.0 L990.0,713.2 L991.0,712.6 L992.1,711.3 L993.1,711.6 L994.1,713.8 L995.1,715.0 L996.1,714.6 L997.2,715.9 L998.2,716.6 L999.2,716.6 L1000.2,717.6 L1001.3,717.4 L1002.3,718.6 L1003.4,718.3 L1004.5,719.2 L1005.5,720.4 L1006.6,720.4 L1007.7,720.6 L1008.8,719.5 L1009.9,721.8 L1010.9,722.2 L1012.0,722.1 L1013.1,723.1 L1014.1,721.7 L1015.2,721.1 L1016.2,719.3 L1017.2,718.9 L1018.2,717.3 L1019.3,715.7 L1020.3,714.1 L1021.3,715.0 L1022.4,714.3 L1023.4,717.1 L1024.4,718.0 L1025.4,720.5 L1026.5,720.7 L1027.5,722.2 L1028.5,722.6 L1029.5,723.2 L1030.5,724.0 L1031.5,725.5 L1032.5,725.4 L1033.5,726.2 L1034.5,726.6 L1035.5,727.8 L1036.5,728.5 L1037.5,728.1 L1038.6,727.8 L1039.6,727.8 L1040.6,727.6 L1041.6,727.0 L1042.7,727.8 L1043.7,727.7 L1044.7,727.8 L1045.8,727.2 L1046.8,726.9 L1047.8,727.2 L1048.8,726.2 L1049.9,727.1 L1050.9,726.7 L1051.9,726.8 L1052.9,727.5 L1053.9,728.1 L1054.9,728.3 L1055.9,728.8 L1056.9,728.9 L1057.9,728.9 L1059.0,729.1 L1060.0,730.3 L1061.0,730.6 L1062.0,730.5 L1063.0,731.4 L1064.0,731.6 L1065.0,732.1 L1066.0,732.4 L1067.0,733.0 L1068.0,732.7 L1069.0,732.1 L1070.0,731.7 L1071.0,731.4 L1072.0,730.9 L1073.0,729.8 L1074.0,729.8 L1075.0,729.5 L1076.2,729.2 L1077.3,729.1 L1078.5,729.6 L1079.6,729.5 L1080.8,729.5 L1081.8,729.9 L1082.8,729.4 L1083.9,731.1 L1084.9,730.9 L1085.9,731.7 L1087.0,732.0 L1088.0,732.4 L1089.0,733.0 L1090.0,733.0 L1091.0,733.5 L1092.0,733.6 L1093.0,733.7 L1094.0,733.7 L1095.0,733.9 L1096.0,733.9 L1097.0,734.2 L1098.0,734.3 L1099.0,734.6 L1100.0,734.5 L1101.0,734.9 L1102.0,735.0 L1103.0,735.1 L1104.0,735.4 L1105.0,735.4 L1106.0,735.6 L1107.0,735.7 L1108.0,735.9 L1109.0,736.0 L1110.0,736.2 L1111.0,736.2 L1112.0,736.2 L1113.0,736.2 L1114.0,736.2 L1115.0,736.2 L1116.0,736.2 L1117.0,736.2 L1118.0,736.2 L1119.0,736.2 L1120.0,736.2 L1121.0,736.2 L1122.0,736.2 L1123.0,736.2 L1124.0,736.2 L1125.0,736.2 L1126.0,736.2 L1127.0,736.2 L1128.0,736.2 L1129.0,736.2 L1130.0,736.2 L1131.0,736.2 L1132.0,736.2 L1133.0,736.2 L1134.0,736.2 L1135.0,736.2 L1136.0,736.2 L1137.0,736.2 L1138.0,736.2 L1139.0,736.2 L1140.0,736.2 L1141.0,736.2 L1142.0,736.2 L1143.0,736.2 L1144.0,736.2 L1145.0,736.2 L1146.0,736.2 L1147.0,736.2 L1148.0,736.2 L1149.0,736.2 L1150.0,736.2 L1151.0,736.2 L1152.0,736.2 L1153.0,736.2 L1154.0,736.2 L1155.0,736.2 L1156.0,736.2 L1157.0,736.3 L1158.0,736.3 L1159.0,736.3 L1160.0,736.3 L1161.0,736.3 L1162.0,736.3 L1163.0,736.3 L1164.0,736.3 L1165.0,736.3 L1166.0,736.3 L1167.0,736.3 L1168.0,736.3 L1169.0,736.3 L1170.0,736.3 L1171.0,736.3 L1172.0,736.3 L1173.0,736.3 L1174.0,736.3 L1175.0,736.3 L1176.0,736.3 L1177.0,736.3 L1178.0,736.3 L1179.0,736.3 L1180.0,736.3 L1181.0,736.3 L1182.0,736.3 L1183.0,736.3 L1184.0,736.3 L1185.0,736.3 L1186.0,736.3 L1187.0,736.3 L1188.0,736.3 L1189.0,736.3 L1190.0,736.3 L1191.0,736.3 L1192.0,736.3 L1193.0,736.3 L1194.0,736.3 L1195.0,736.3 L1196.0,736.3 L1197.0,736.3 L1198.0,736.3 L1199.0,736.3 L1200.0,736.3 L1201.0,736.3 L1202.0,736.3 L1203.0,736.3 L1204.0,736.3 L1205.0,736.3 L1206.0,736.3 L1207.0,736.3 L1208.0,736.3 L1209.0,736.3 L1210.0,736.3 L1211.0,736.3 L1212.0,736.3 L1213.0,736.3 L1214.0,736.3 L1215.0,736.3 L1216.0,736.3 L1217.0,736.3 L1218.0,736.3 L1219.0,736.3 L1220.0,736.3 L1221.0,736.3 L1222.0,736.3 L1223.0,736.3 L1224.0,736.3 L1225.0,736.3 L1226.0,736.3 L1227.0,736.3 L1228.0,736.3 L1229.0,736.3 L1230.0,736.3 L1231.0,736.3 L1232.0,736.3 L1233.0,736.3 L1234.0,736.3 L1235.0,736.3 L1236.0,736.3 L1237.0,736.3 L1238.0,736.3 L1239.0,736.3 L1240.0,736.3 L1241.0,736.3 L1242.0,736.3 L1243.0,736.3 L1244.0,736.3 L1245.0,736.3 L1246.0,736.3 L1247.0,736.3 L1248.0,736.3 L1249.0,736.4 L1250.0,736.4 L1251.0,736.4 L1252.0,736.4 L1253.0,736.4 L1254.0,736.4 L1255.0,736.4 L1256.0,736.4 L1257.0,736.4 L1258.0,736.4 L1259.0,736.4 L1260.0,736.4 L1261.0,736.4 L1262.0,736.4 L1263.0,736.4 L1264.0,736.4 L1265.0,736.4 L1266.0,736.4 L1267.0,736.4 L1268.0,736.4 L1269.0,736.4 L1270.0,736.4 L1271.0,736.4 L1272.0,736.4 L1273.0,736.4 L1274.0,736.4 L1275.0,736.4 L1276.0,736.4 L1277.0,736.4 L1278.0,736.4 L1279.0,736.4 L1280.0,736.4 L1281.0,736.4 L1282.0,736.4 L1283.0,736.4 L1284.0,736.4 L1285.0,736.4 L1286.0,736.4 L1287.0,736.4 L1288.0,736.4 L1289.0,736.4 L1290.0,736.4 L1291.0,736.4 L1292.0,736.4 L1293.0,736.4 L1294.0,736.4 L1295.0,736.4 L1296.0,736.4 L1297.0,736.4 L1298.0,736.4 L1299.0,736.4 L1300.0,736.4 L1301.0,736.4 L1302.0,736.4 L1303.0,736.4 L1304.0,736.4 L1305.0,736.4 L1306.0,736.4 L1307.0,736.4 L1308.0,736.4 L1309.0,736.4 L1310.0,736.4 L1311.0,736.4 L1312.0,736.4 L1313.0,736.4 L1314.0,736.4 L1315.0,736.4 L1316.0,736.4 L1317.0,736.4 L1318.0,736.4 L1319.0,736.4 L1320.0,736.4 L1321.0,736.4 L1322.0,736.4 L1323.0,736.4 L1324.0,736.4 L1325.0,736.4 L1326.0,736.4 L1327.0,736.4 L1328.0,736.4 L1329.0,736.4 L1330.0,736.4 L1331.0,736.4 L1332.0,736.4 L1333.0,736.4 L1334.0,736.4 L1335.0,736.4 L1336.0,736.4 L1337.0,736.4 L1338.0,736.4 L1339.0,736.4 L1340.0,736.4 L1341.0,736.5 L1342.0,736.5 L1343.0,736.5 L1344.0,736.5 L1345.0,736.5 L1346.0,736.5 L1347.0,736.5 L1348.0,736.5 L1349.0,736.5 L1350.0,736.5 L1351.0,736.5 L1352.0,736.5 L1353.0,736.5 L1354.0,736.5 L1355.0,736.5 L1356.0,736.5 L1357.0,736.5 L1358.0,736.5 L1359.0,736.5 L1360.0,736.5 L1361.0,736.5 L1362.0,736.5 L1363.0,736.5 L1364.0,736.5 L1365.0,736.5 L1366.0,736.5 L1367.0,736.5 L1368.0,736.5 L1369.0,736.5 L1370.0,736.5 L1371.0,736.5 L1372.0,736.5 L1373.0,736.5 L1374.0,736.5 L1375.0,736.5 L1376.0,736.5 L1377.0,736.5 L1378.0,736.5 L1379.0,736.5 L1380.0,736.5 L1381.0,736.5 L1382.0,736.5 L1383.0,736.5 L1384.0,736.5 L1385.0,736.5 L1386.0,736.5 L1387.0,736.5 L1388.0,736.5 L1389.0,736.5 L1390.0,736.5 L1391.0,736.5 L1392.0,736.5 L1393.0,736.5 L1394.0,736.5 L1395.0,736.5 L1396.0,736.5 L1397.0,736.5 L1398.0,736.5 L1399.0,736.5 L1400.0,736.5 L1401.0,736.5 L1402.0,736.5 L1403.0,736.5 L1404.0,736.5 L1405.0,736.5 L1406.0,736.5 L1407.0,736.5 L1408.0,736.5 L1409.0,736.5 L1410.0,736.5 L1411.0,736.5 L1412.0,736.5 L1413.0,736.5 L1414.0,736.5 L1415.0,736.5 L1416.0,736.5 L1417.0,736.5 L1418.0,736.5 L1419.0,736.5 L1420.0,736.5 L1421.0,736.5 L1422.0,736.5 L1423.0,736.5 L1424.0,736.5 L1425.0,736.5 L1426.0,736.5 L1427.0,736.5 L1428.0,736.5 L1429.0,736.5 L1430.0,736.5 L1431.0,736.5 L1432.0,736.5 L1433.0,736.6 L1434.0,736.6 L1435.0,736.6 L1436.0,736.6 L1437.0,736.6 L1438.0,736.6 L1439.0,736.6 L1440.0,736.6 L1441.0,736.6 L1442.0,736.6 L1443.0,736.6 L1444.0,736.6 L1445.0,736.6 L1446.0,736.6 L1447.0,736.6 L1448.0,736.6 L1449.0,736.6 L1450.0,736.6 L1451.0,736.6 L1452.0,736.6 L1453.0,736.6 L1454.0,736.6 L1455.0,736.6 L1456.0,736.6 L1457.0,736.6 L1458.0,736.6 L1459.0,736.6 L1460.0,736.6 L1461.0,736.6 L1462.0,736.6 L1463.0,736.6 L1464.0,736.6 L1465.0,736.6 L1466.0,736.6 L1467.0,736.6 L1468.0,736.6 L1469.0,736.6 L1470.0,736.6 L1471.0,736.6 L1472.0,736.6 L1473.0,736.6 L1474.0,736.6 L1475.0,736.6 L1476.0,736.6 L1477.0,736.6 L1478.0,736.6 L1479.0,736.6 L1479.0,736.6 Z" fill="#f0c948"/>
<path d="M343.0,736.6 L343.0,736.6 L344.0,736.6 L345.0,736.6 L346.0,736.6 L347.0,736.6 L348.0,736.6 L349.0,736.6 L350.0,736.6 L351.0,736.6 L352.0,736.6 L353.0,736.6 L354.0,736.6 L355.0,736.6 L356.0,736.6 L357.0,736.6 L358.0,736.6 L359.0,736.6 L360.0,736.6 L361.0,736.6 L362.0,736.6 L363.0,736.6 L364.0,736.6 L365.0,736.6 L366.0,736.6 L367.0,736.6 L368.0,736.6 L369.0,736.6 L370.0,736.6 L371.0,736.6 L372.0,736.6 L373.0,736.6 L374.0,736.6 L375.0,736.6 L376.0,736.6 L377.1,736.6 L378.1,736.6 L379.1,736.6 L380.1,736.6 L381.1,736.6 L382.1,736.6 L383.1,736.6 L384.1,736.6 L385.1,736.6 L386.1,736.6 L387.1,736.6 L388.1,736.6 L389.1,736.6 L390.1,736.6 L391.1,736.6 L392.1,736.6 L393.1,736.6 L394.1,736.6 L395.1,736.6 L396.1,736.6 L397.1,736.6 L398.1,736.6 L399.1,736.6 L400.1,736.6 L401.1,736.6 L402.1,736.6 L403.1,736.6 L404.1,736.6 L405.1,736.6 L406.1,736.6 L407.1,736.6 L408.1,736.6 L409.1,736.6 L410.1,736.6 L411.1,736.6 L412.1,736.6 L413.1,736.6 L414.1,736.6 L415.1,736.6 L416.1,736.6 L417.1,736.6 L418.1,736.6 L419.1,736.6 L420.1,736.6 L421.1,736.6 L422.1,736.6 L423.1,736.6 L424.1,736.6 L425.1,736.6 L426.1,736.6 L427.1,736.6 L428.1,736.6 L429.1,736.6 L430.1,736.6 L431.1,736.6 L432.1,736.6 L433.1,736.6 L434.1,736.6 L435.1,736.6 L436.1,736.6 L437.1,736.6 L438.1,736.6 L439.1,736.6 L440.1,736.6 L441.1,736.6 L442.1,736.6 L443.1,736.6 L444.1,736.6 L445.2,736.6 L446.2,736.6 L447.2,736.6 L448.2,736.6 L449.2,736.6 L450.2,736.6 L451.2,736.6 L452.2,736.6 L453.2,736.6 L454.2,736.6 L455.2,736.6 L456.2,736.6 L457.2,736.6 L458.2,736.6 L459.2,736.6 L460.2,736.6 L461.2,736.6 L462.2,736.6 L463.2,736.6 L464.2,736.6 L465.2,736.6 L466.2,736.6 L467.2,736.6 L468.2,736.6 L469.2,736.6 L470.2,736.6 L471.2,736.6 L472.2,736.6 L473.2,736.6 L474.2,736.6 L475.2,736.6 L476.2,736.6 L477.2,736.6 L478.2,736.6 L479.2,736.6 L480.2,736.6 L481.2,736.6 L482.2,736.6 L483.2,736.6 L484.2,736.6 L485.2,736.6 L486.2,736.6 L487.2,736.6 L488.2,736.6 L489.2,736.6 L490.2,736.6 L491.2,736.6 L492.2,736.6 L493.2,736.6 L494.2,736.6 L495.2,736.6 L496.2,736.6 L497.2,736.6 L498.2,736.6 L499.2,736.6 L500.2,736.6 L501.2,736.6 L502.2,736.6 L503.2,736.6 L504.2,736.6 L505.2,736.6 L506.2,736.6 L507.2,736.6 L508.2,736.6 L509.2,736.6 L510.2,736.6 L511.2,736.6 L512.3,736.6 L513.3,736.6 L514.3,736.6 L515.3,736.6 L516.3,736.6 L517.3,736.6 L518.3,736.6 L519.3,736.6 L520.3,736.6 L521.3,736.6 L522.3,736.6 L523.3,736.6 L524.3,736.6 L525.3,736.6 L526.3,736.6 L527.3,736.6 L528.3,736.6 L529.3,736.6 L530.3,736.6 L531.3,736.6 L532.3,736.6 L533.3,736.6 L534.3,736.6 L535.3,736.6 L536.3,736.6 L537.3,736.6 L538.3,736.6 L539.3,736.6 L540.3,736.6 L541.3,736.6 L542.3,736.6 L543.3,736.6 L544.3,736.6 L545.3,736.6 L546.3,736.6 L547.3,736.6 L548.3,736.6 L549.3,736.6 L550.3,736.6 L551.3,736.6 L552.3,736.6 L553.3,736.6 L554.3,736.6 L555.3,736.6 L556.3,736.6 L557.3,736.6 L558.3,736.6 L559.3,736.6 L560.3,736.6 L561.3,736.6 L562.3,736.6 L563.3,736.6 L564.3,736.6 L565.3,736.6 L566.3,736.6 L567.3,736.6 L568.3,736.6 L569.3,736.6 L570.3,736.6 L571.3,736.6 L572.3,736.6 L573.3,736.6 L574.3,736.6 L575.3,736.6 L576.3,736.6 L577.3,736.6 L578.3,736.6 L579.4,736.6 L580.4,736.6 L581.4,736.6 L582.4,736.6 L583.4,736.6 L584.4,736.6 L585.4,736.6 L586.4,736.6 L587.4,736.6 L588.4,736.6 L589.4,736.6 L590.4,736.6 L591.4,736.6 L592.4,736.6 L593.4,736.6 L594.4,736.6 L595.4,736.6 L596.4,736.6 L597.4,736.6 L598.4,736.6 L599.4,736.6 L600.4,736.6 L601.4,736.6 L602.4,736.6 L603.4,736.6 L604.4,736.6 L605.4,736.6 L606.4,736.6 L607.4,736.6 L608.4,736.6 L609.4,736.6 L610.4,736.6 L611.4,736.6 L612.4,736.6 L613.4,736.6 L614.4,736.6 L615.4,736.6 L616.4,736.6 L617.4,736.6 L618.4,736.6 L619.4,736.6 L620.4,736.6 L621.4,736.6 L622.4,736.6 L623.4,736.6 L624.4,736.6 L625.4,736.6 L626.4,736.6 L627.4,736.6 L628.4,736.6 L629.4,736.6 L630.4,736.6 L631.4,736.6 L632.4,736.6 L633.4,736.6 L634.4,736.6 L635.4,736.6 L636.4,736.6 L637.4,736.6 L638.4,736.6 L639.4,736.6 L640.4,736.6 L641.4,736.6 L642.4,736.6 L643.4,736.6 L644.4,736.6 L645.4,736.6 L646.5,736.6 L647.5,736.6 L648.5,736.6 L649.5,736.6 L650.5,736.6 L651.5,736.6 L652.5,736.6 L653.5,736.6 L654.5,736.6 L655.5,736.6 L656.5,736.6 L657.5,736.6 L658.5,736.6 L659.5,736.6 L660.5,736.6 L661.5,736.6 L662.5,736.6 L663.5,736.6 L664.5,736.6 L665.5,736.6 L666.5,736.6 L667.5,736.6 L668.5,736.6 L669.5,736.6 L670.5,736.6 L671.5,736.6 L672.5,736.6 L673.5,736.6 L674.5,736.6 L675.5,736.6 L676.5,736.6 L677.5,736.6 L678.5,736.6 L679.5,736.6 L680.5,736.6 L681.5,736.6 L682.5,736.6 L683.5,736.6 L684.5,736.6 L685.5,736.6 L686.5,736.6 L687.5,736.6 L688.5,736.6 L689.5,736.6 L690.5,736.6 L691.5,736.6 L692.5,736.6 L693.5,736.6 L694.5,736.6 L695.5,736.6 L696.5,736.6 L697.5,736.6 L698.5,736.6 L699.5,736.6 L700.5,736.6 L701.5,736.6 L702.5,736.6 L703.5,736.6 L704.5,736.6 L705.5,736.6 L706.5,736.6 L707.5,736.6 L708.5,736.6 L709.5,736.6 L710.5,736.6 L711.5,736.6 L712.5,736.6 L713.5,736.6 L714.6,736.6 L715.6,736.6 L716.6,736.6 L717.6,736.6 L718.6,736.6 L719.6,736.6 L720.6,736.6 L721.6,736.6 L722.6,736.6 L723.6,736.6 L724.6,736.6 L725.6,736.6 L726.6,736.6 L727.6,736.6 L728.6,736.6 L729.6,736.6 L730.6,736.6 L731.6,736.6 L732.6,736.6 L733.6,736.6 L734.6,736.6 L735.6,736.6 L736.6,736.6 L737.6,736.6 L738.6,736.6 L739.6,736.6 L740.6,736.6 L741.6,736.6 L742.6,736.6 L743.6,736.6 L744.6,736.6 L745.6,736.6 L746.6,736.6 L747.6,736.6 L748.5,733.0 L749.5,731.6 L750.5,730.2 L751.5,729.2 L752.5,726.8 L753.6,726.3 L754.6,724.9 L755.6,723.9 L756.6,723.0 L757.8,723.9 L759.0,723.5 L760.2,724.0 L761.3,723.7 L762.4,724.3 L763.4,724.4 L764.5,725.4 L765.6,725.4 L766.7,725.5 L767.8,725.4 L768.8,725.6 L769.9,726.2 L771.0,726.7 L772.1,726.4 L773.2,726.5 L774.2,725.6 L775.3,725.6 L776.4,725.6 L777.5,725.6 L778.6,724.1 L779.6,724.5 L780.7,723.3 L781.8,724.0 L782.8,723.9 L783.8,723.1 L784.8,722.3 L785.8,722.1 L786.8,721.0 L787.8,719.7 L788.8,720.0 L789.8,719.8 L790.8,718.6 L791.8,717.4 L792.8,715.6 L793.8,714.9 L794.8,713.9 L795.8,713.0 L796.8,713.3 L797.8,709.4 L798.8,710.5 L799.9,712.5 L801.0,712.8 L802.2,714.3 L803.3,716.0 L804.5,716.2 L805.8,714.0 L807.0,714.0 L808.0,711.4 L809.0,710.0 L810.0,707.7 L811.0,703.7 L812.0,701.4 L813.0,699.5 L814.0,695.6 L815.0,692.5 L816.2,692.3 L817.3,688.2 L818.5,690.8 L819.5,688.3 L820.5,684.5 L821.5,677.7 L822.5,675.9 L823.5,675.5 L824.5,673.8 L825.5,671.2 L826.5,672.1 L827.5,672.4 L828.5,670.8 L829.5,670.5 L830.7,660.7 L832.0,661.7 L833.2,663.9 L834.5,664.5 L836.2,660.7 L837.5,664.3 L838.8,668.0 L840.0,664.4 L841.3,662.4 L842.6,678.0 L843.8,675.3 L844.9,677.6 L846.1,674.6 L847.2,678.5 L849.0,690.8 L850.2,692.1 L851.5,693.3 L852.8,695.7 L854.0,701.8 L855.1,701.9 L856.3,701.0 L857.4,701.0 L859.0,699.2 L860.0,696.7 L861.0,693.6 L862.0,690.0 L863.0,694.4 L864.0,700.0 L865.2,701.8 L866.3,702.3 L867.5,702.6 L868.8,702.9 L870.0,702.2 L871.0,701.5 L872.0,699.7 L873.0,697.2 L874.0,700.1 L875.0,698.4 L876.0,699.9 L877.0,700.6 L878.0,699.8 L879.0,700.4 L880.0,701.6 L881.2,700.2 L882.4,699.0 L883.6,697.0 L884.8,695.0 L885.9,691.5 L887.0,690.4 L888.1,686.9 L889.4,660.4 L890.6,632.8 L892.2,609.8 L893.5,614.9 L894.7,621.3 L895.8,628.1 L896.9,636.4 L898.0,642.6 L899.2,630.1 L900.4,618.0 L902.0,646.0 L903.1,634.9 L904.2,623.0 L906.1,634.4 L907.1,635.7 L908.2,639.3 L909.2,639.8 L910.2,642.6 L911.2,644.9 L912.2,644.9 L913.2,645.8 L914.2,644.3 L915.2,649.2 L916.3,652.8 L917.3,655.4 L918.4,657.4 L919.4,649.8 L920.5,643.0 L921.5,636.6 L922.5,629.5 L923.6,633.7 L924.7,639.1 L925.8,642.6 L926.9,649.1 L928.0,656.5 L929.1,662.3 L930.3,665.6 L931.5,667.2 L932.8,668.6 L934.0,672.0 L935.1,673.6 L936.2,672.3 L937.3,678.7 L938.4,681.3 L939.5,682.7 L940.6,685.2 L941.7,686.1 L942.8,686.1 L943.9,687.2 L945.0,688.5 L946.0,689.5 L947.0,689.5 L948.1,690.6 L949.1,690.5 L950.1,690.7 L951.3,688.5 L952.5,686.3 L953.8,684.1 L955.0,682.0 L956.0,682.5 L957.0,683.1 L958.0,682.4 L959.0,683.1 L960.0,681.7 L961.0,682.6 L962.0,683.2 L963.0,684.6 L964.0,687.4 L965.1,687.6 L966.1,690.0 L967.1,691.9 L968.1,692.5 L969.3,694.3 L970.5,697.1 L971.7,699.7 L972.7,702.2 L973.7,702.0 L974.7,704.2 L975.7,705.1 L976.7,707.6 L977.7,705.9 L978.7,708.4 L979.7,710.8 L980.7,713.2 L981.7,713.6 L982.8,712.2 L983.8,711.9 L984.9,712.2 L985.9,712.4 L987.0,713.1 L988.0,712.3 L989.0,712.0 L990.0,713.2 L991.0,712.6 L992.1,711.3 L993.1,711.6 L994.1,713.8 L995.1,715.0 L996.1,714.6 L997.2,715.9 L998.2,716.6 L999.2,716.6 L1000.2,717.6 L1001.3,717.4 L1002.3,718.6 L1003.4,718.3 L1004.5,719.2 L1005.5,720.4 L1006.6,720.4 L1007.7,720.6 L1008.8,719.5 L1009.9,721.8 L1010.9,722.2 L1012.0,722.1 L1013.1,723.1 L1014.1,721.7 L1015.2,721.1 L1016.2,719.3 L1017.2,718.9 L1018.2,717.3 L1019.3,715.7 L1020.3,714.1 L1021.3,715.0 L1022.4,714.3 L1023.4,717.1 L1024.4,718.0 L1025.4,720.5 L1026.5,720.7 L1027.5,722.2 L1028.5,722.6 L1029.5,723.2 L1030.5,724.0 L1031.5,725.5 L1032.5,725.4 L1033.5,726.2 L1034.5,726.6 L1035.5,727.8 L1036.5,728.5 L1037.5,728.1 L1038.6,727.8 L1039.6,727.8 L1040.6,727.6 L1041.6,727.0 L1042.7,727.8 L1043.7,727.7 L1044.7,727.8 L1045.8,727.2 L1046.8,726.9 L1047.8,727.2 L1048.8,726.2 L1049.9,727.1 L1050.9,726.7 L1051.9,726.8 L1052.9,727.5 L1053.9,728.1 L1054.9,728.3 L1055.9,728.8 L1056.9,728.9 L1057.9,728.9 L1059.0,729.1 L1060.0,730.3 L1061.0,730.6 L1062.0,730.5 L1063.0,731.4 L1064.0,731.6 L1065.0,732.1 L1066.0,732.4 L1067.0,733.0 L1068.0,732.7 L1069.0,732.1 L1070.0,731.7 L1071.0,731.4 L1072.0,730.9 L1073.0,729.8 L1074.0,729.8 L1075.0,729.5 L1076.2,729.2 L1077.3,729.1 L1078.5,729.6 L1079.6,729.5 L1080.8,729.5 L1081.8,729.9 L1082.8,729.4 L1083.9,731.1 L1084.9,730.9 L1085.9,731.7 L1087.0,732.0 L1088.0,732.4 L1089.0,733.0 L1090.0,733.0 L1091.0,733.5 L1092.0,733.6 L1093.0,733.7 L1094.0,733.7 L1095.0,733.9 L1096.0,733.9 L1097.0,734.2 L1098.0,734.3 L1099.0,734.6 L1100.0,734.5 L1101.0,734.9 L1102.0,735.0 L1103.0,735.1 L1104.0,735.4 L1105.0,735.4 L1106.0,735.6 L1107.0,735.7 L1108.0,735.9 L1109.0,736.0 L1110.0,736.2 L1111.0,736.2 L1112.0,736.2 L1113.0,736.2 L1114.0,736.2 L1115.0,736.2 L1116.0,736.2 L1117.0,736.2 L1118.0,736.2 L1119.0,736.2 L1120.0,736.2 L1121.0,736.2 L1122.0,736.2 L1123.0,736.2 L1124.0,736.2 L1125.0,736.2 L1126.0,736.2 L1127.0,736.2 L1128.0,736.2 L1129.0,736.2 L1130.0,736.2 L1131.0,736.2 L1132.0,736.2 L1133.0,736.2 L1134.0,736.2 L1135.0,736.2 L1136.0,736.2 L1137.0,736.2 L1138.0,736.2 L1139.0,736.2 L1140.0,736.2 L1141.0,736.2 L1142.0,736.2 L1143.0,736.2 L1144.0,736.2 L1145.0,736.2 L1146.0,736.2 L1147.0,736.2 L1148.0,736.2 L1149.0,736.2 L1150.0,736.2 L1151.0,736.2 L1152.0,736.2 L1153.0,736.2 L1154.0,736.2 L1155.0,736.2 L1156.0,736.2 L1157.0,736.3 L1158.0,736.3 L1159.0,736.3 L1160.0,736.3 L1161.0,736.3 L1162.0,736.3 L1163.0,736.3 L1164.0,736.3 L1165.0,736.3 L1166.0,736.3 L1167.0,736.3 L1168.0,736.3 L1169.0,736.3 L1170.0,736.3 L1171.0,736.3 L1172.0,736.3 L1173.0,736.3 L1174.0,736.3 L1175.0,736.3 L1176.0,736.3 L1177.0,736.3 L1178.0,736.3 L1179.0,736.3 L1180.0,736.3 L1181.0,736.3 L1182.0,736.3 L1183.0,736.3 L1184.0,736.3 L1185.0,736.3 L1186.0,736.3 L1187.0,736.3 L1188.0,736.3 L1189.0,736.3 L1190.0,736.3 L1191.0,736.3 L1192.0,736.3 L1193.0,736.3 L1194.0,736.3 L1195.0,736.3 L1196.0,736.3 L1197.0,736.3 L1198.0,736.3 L1199.0,736.3 L1200.0,736.3 L1201.0,736.3 L1202.0,736.3 L1203.0,736.3 L1204.0,736.3 L1205.0,736.3 L1206.0,736.3 L1207.0,736.3 L1208.0,736.3 L1209.0,736.3 L1210.0,736.3 L1211.0,736.3 L1212.0,736.3 L1213.0,736.3 L1214.0,736.3 L1215.0,736.3 L1216.0,736.3 L1217.0,736.3 L1218.0,736.3 L1219.0,736.3 L1220.0,736.3 L1221.0,736.3 L1222.0,736.3 L1223.0,736.3 L1224.0,736.3 L1225.0,736.3 L1226.0,736.3 L1227.0,736.3 L1228.0,736.3 L1229.0,736.3 L1230.0,736.3 L1231.0,736.3 L1232.0,736.3 L1233.0,736.3 L1234.0,736.3 L1235.0,736.3 L1236.0,736.3 L1237.0,736.3 L1238.0,736.3 L1239.0,736.3 L1240.0,736.3 L1241.0,736.3 L1242.0,736.3 L1243.0,736.3 L1244.0,736.3 L1245.0,736.3 L1246.0,736.3 L1247.0,736.3 L1248.0,736.3 L1249.0,736.4 L1250.0,736.4 L1251.0,736.4 L1252.0,736.4 L1253.0,736.4 L1254.0,736.4 L1255.0,736.4 L1256.0,736.4 L1257.0,736.4 L1258.0,736.4 L1259.0,736.4 L1260.0,736.4 L1261.0,736.4 L1262.0,736.4 L1263.0,736.4 L1264.0,736.4 L1265.0,736.4 L1266.0,736.4 L1267.0,736.4 L1268.0,736.4 L1269.0,736.4 L1270.0,736.4 L1271.0,736.4 L1272.0,736.4 L1273.0,736.4 L1274.0,736.4 L1275.0,736.4 L1276.0,736.4 L1277.0,736.4 L1278.0,736.4 L1279.0,736.4 L1280.0,736.4 L1281.0,736.4 L1282.0,736.4 L1283.0,736.4 L1284.0,736.4 L1285.0,736.4 L1286.0,736.4 L1287.0,736.4 L1288.0,736.4 L1289.0,736.4 L1290.0,736.4 L1291.0,736.4 L1292.0,736.4 L1293.0,736.4 L1294.0,736.4 L1295.0,736.4 L1296.0,736.4 L1297.0,736.4 L1298.0,736.4 L1299.0,736.4 L1300.0,736.4 L1301.0,736.4 L1302.0,736.4 L1303.0,736.4 L1304.0,736.4 L1305.0,736.4 L1306.0,736.4 L1307.0,736.4 L1308.0,736.4 L1309.0,736.4 L1310.0,736.4 L1311.0,736.4 L1312.0,736.4 L1313.0,736.4 L1314.0,736.4 L1315.0,736.4 L1316.0,736.4 L1317.0,736.4 L1318.0,736.4 L1319.0,736.4 L1320.0,736.4 L1321.0,736.4 L1322.0,736.4 L1323.0,736.4 L1324.0,736.4 L1325.0,736.4 L1326.0,736.4 L1327.0,736.4 L1328.0,736.4 L1329.0,736.4 L1330.0,736.4 L1331.0,736.4 L1332.0,736.4 L1333.0,736.4 L1334.0,736.4 L1335.0,736.4 L1336.0,736.4 L1337.0,736.4 L1338.0,736.4 L1339.0,736.4 L1340.0,736.4 L1341.0,736.5 L1342.0,736.5 L1343.0,736.5 L1344.0,736.5 L1345.0,736.5 L1346.0,736.5 L1347.0,736.5 L1348.0,736.5 L1349.0,736.5 L1350.0,736.5 L1351.0,736.5 L1352.0,736.5 L1353.0,736.5 L1354.0,736.5 L1355.0,736.5 L1356.0,736.5 L1357.0,736.5 L1358.0,736.5 L1359.0,736.5 L1360.0,736.5 L1361.0,736.5 L1362.0,736.5 L1363.0,736.5 L1364.0,736.5 L1365.0,736.5 L1366.0,736.5 L1367.0,736.5 L1368.0,736.5 L1369.0,736.5 L1370.0,736.5 L1371.0,736.5 L1372.0,736.5 L1373.0,736.5 L1374.0,736.5 L1375.0,736.5 L1376.0,736.5 L1377.0,736.5 L1378.0,736.5 L1379.0,736.5 L1380.0,736.5 L1381.0,736.5 L1382.0,736.5 L1383.0,736.5 L1384.0,736.5 L1385.0,736.5 L1386.0,736.5 L1387.0,736.5 L1388.0,736.5 L1389.0,736.5 L1390.0,736.5 L1391.0,736.5 L1392.0,736.5 L1393.0,736.5 L1394.0,736.5 L1395.0,736.5 L1396.0,736.5 L1397.0,736.5 L1398.0,736.5 L1399.0,736.5 L1400.0,736.5 L1401.0,736.5 L1402.0,736.5 L1403.0,736.5 L1404.0,736.5 L1405.0,736.5 L1406.0,736.5 L1407.0,736.5 L1408.0,736.5 L1409.0,736.5 L1410.0,736.5 L1411.0,736.5 L1412.0,736.5 L1413.0,736.5 L1414.0,736.5 L1415.0,736.5 L1416.0,736.5 L1417.0,736.5 L1418.0,736.5 L1419.0,736.5 L1420.0,736.5 L1421.0,736.5 L1422.0,736.5 L1423.0,736.5 L1424.0,736.5 L1425.0,736.5 L1426.0,736.5 L1427.0,736.5 L1428.0,736.5 L1429.0,736.5 L1430.0,736.5 L1431.0,736.5 L1432.0,736.5 L1433.0,736.6 L1434.0,736.6 L1435.0,736.6 L1436.0,736.6 L1437.0,736.6 L1438.0,736.6 L1439.0,736.6 L1440.0,736.6 L1441.0,736.6 L1442.0,736.6 L1443.0,736.6 L1444.0,736.6 L1445.0,736.6 L1446.0,736.6 L1447.0,736.6 L1448.0,736.6 L1449.0,736.6 L1450.0,736.6 L1451.0,736.6 L1452.0,736.6 L1453.0,736.6 L1454.0,736.6 L1455.0,736.6 L1456.0,736.6 L1457.0,736.6 L1458.0,736.6 L1459.0,736.6 L1460.0,736.6 L1461.0,736.6 L1462.0,736.6 L1463.0,736.6 L1464.0,736.6 L1465.0,736.6 L1466.0,736.6 L1467.0,736.6 L1468.0,736.6 L1469.0,736.6 L1470.0,736.6 L1471.0,736.6 L1472.0,736.6 L1473.0,736.6 L1474.0,736.6 L1475.0,736.6 L1476.0,736.6 L1477.0,736.6 L1478.0,736.6 L1479.0,736.6 L1479.0,736.6 Z" fill="#e4bd48" clip-path="url(#gclip)"/>
<polyline points="343.0,736.6 344.0,736.6 345.0,736.6 346.0,736.6 347.0,736.6 348.0,736.6 349.0,736.6 350.0,736.6 351.0,736.6 352.0,736.6 353.0,736.6 354.0,736.6 355.0,736.6 356.0,736.6 357.0,736.6 358.0,736.6 359.0,736.6 360.0,736.6 361.0,736.6 362.0,736.6 363.0,736.6 364.0,736.6 365.0,736.6 366.0,736.6 367.0,736.6 368.0,736.6 369.0,736.6 370.0,736.6 371.0,736.6 372.0,736.6 373.0,736.6 374.0,736.6 375.0,736.6 376.0,736.6 377.1,736.6 378.1,736.6 379.1,736.6 380.1,736.6 381.1,736.6 382.1,736.6 383.1,736.6 384.1,736.6 385.1,736.6 386.1,736.6 387.1,736.6 388.1,736.6 389.1,736.6 390.1,736.6 391.1,736.6 392.1,736.6 393.1,736.6 394.1,736.6 395.1,736.6 396.1,736.6 397.1,736.6 398.1,736.6 399.1,736.6 400.1,736.6 401.1,736.6 402.1,736.6 403.1,736.6 404.1,736.6 405.1,736.6 406.1,736.6 407.1,736.6 408.1,736.6 409.1,736.6 410.1,736.6 411.1,736.6 412.1,736.6 413.1,736.6 414.1,736.6 415.1,736.6 416.1,736.6 417.1,736.6 418.1,736.6 419.1,736.6 420.1,736.6 421.1,736.6 422.1,736.6 423.1,736.6 424.1,736.6 425.1,736.6 426.1,736.6 427.1,736.6 428.1,736.6 429.1,736.6 430.1,736.6 431.1,736.6 432.1,736.6 433.1,736.6 434.1,736.6 435.1,736.6 436.1,736.6 437.1,736.6 438.1,736.6 439.1,736.6 440.1,736.6 441.1,736.6 442.1,736.6 443.1,736.6 444.1,736.6 445.2,736.6 446.2,736.6 447.2,736.6 448.2,736.6 449.2,736.6 450.2,736.6 451.2,736.6 452.2,736.6 453.2,736.6 454.2,736.6 455.2,736.6 456.2,736.6 457.2,736.6 458.2,736.6 459.2,736.6 460.2,736.6 461.2,736.6 462.2,736.6 463.2,736.6 464.2,736.6 465.2,736.6 466.2,736.6 467.2,736.6 468.2,736.6 469.2,736.6 470.2,736.6 471.2,736.6 472.2,736.6 473.2,736.6 474.2,736.6 475.2,736.6 476.2,736.6 477.2,736.6 478.2,736.6 479.2,736.6 480.2,736.6 481.2,736.6 482.2,736.6 483.2,736.6 484.2,736.6 485.2,736.6 486.2,736.6 487.2,736.6 488.2,736.6 489.2,736.6 490.2,736.6 491.2,736.6 492.2,736.6 493.2,736.6 494.2,736.6 495.2,736.6 496.2,736.6 497.2,736.6 498.2,736.6 499.2,736.6 500.2,736.6 501.2,736.6 502.2,736.6 503.2,736.6 504.2,736.6 505.2,736.6 506.2,736.6 507.2,736.6 508.2,736.6 509.2,736.6 510.2,736.6 511.2,736.6 512.3,736.6 513.3,736.6 514.3,736.6 515.3,736.6 516.3,736.6 517.3,736.6 518.3,736.6 519.3,736.6 520.3,736.6 521.3,736.6 522.3,736.6 523.3,736.6 524.3,736.6 525.3,736.6 526.3,736.6 527.3,736.6 528.3,736.6 529.3,736.6 530.3,736.6 531.3,736.6 532.3,736.6 533.3,736.6 534.3,736.6 535.3,736.6 536.3,736.6 537.3,736.6 538.3,736.6 539.3,736.6 540.3,736.6 541.3,736.6 542.3,736.6 543.3,736.6 544.3,736.6 545.3,736.6 546.3,736.6 547.3,736.6 548.3,736.6 549.3,736.6 550.3,736.6 551.3,736.6 552.3,736.6 553.3,736.6 554.3,736.6 555.3,736.6 556.3,736.6 557.3,736.6 558.3,736.6 559.3,736.6 560.3,736.6 561.3,736.6 562.3,736.6 563.3,736.6 564.3,736.6 565.3,736.6 566.3,736.6 567.3,736.6 568.3,736.6 569.3,736.6 570.3,736.6 571.3,736.6 572.3,736.6 573.3,736.6 574.3,736.6 575.3,736.6 576.3,736.6 577.3,736.6 578.3,736.6 579.4,736.6 580.4,736.6 581.4,736.6 582.4,736.6 583.4,736.6 584.4,736.6 585.4,736.6 586.4,736.6 587.4,736.6 588.4,736.6 589.4,736.6 590.4,736.6 591.4,736.6 592.4,736.6 593.4,736.6 594.4,736.6 595.4,736.6 596.4,736.6 597.4,736.6 598.4,736.6 599.4,736.6 600.4,736.6 601.4,736.6 602.4,736.6 603.4,736.6 604.4,736.6 605.4,736.6 606.4,736.6 607.4,736.6 608.4,736.6 609.4,736.6 610.4,736.6 611.4,736.6 612.4,736.6 613.4,736.6 614.4,736.6 615.4,736.6 616.4,736.6 617.4,736.6 618.4,736.6 619.4,736.6 620.4,736.6 621.4,736.6 622.4,736.6 623.4,736.6 624.4,736.6 625.4,736.6 626.4,736.6 627.4,736.6 628.4,736.6 629.4,736.6 630.4,736.6 631.4,736.6 632.4,736.6 633.4,736.6 634.4,736.6 635.4,736.6 636.4,736.6 637.4,736.6 638.4,736.6 639.4,736.6 640.4,736.6 641.4,736.6 642.4,736.6 643.4,736.6 644.4,736.6 645.4,736.6 646.5,736.6 647.5,736.6 648.5,736.6 649.5,736.6 650.5,736.6 651.5,736.6 652.5,736.6 653.5,736.6 654.5,736.6 655.5,736.6 656.5,736.6 657.5,736.6 658.5,736.6 659.5,736.6 660.5,736.6 661.5,736.6 662.5,736.6 663.5,736.6 664.5,736.6 665.5,736.6 666.5,736.6 667.5,736.6 668.5,736.6 669.5,736.6 670.5,736.6 671.5,736.6 672.5,736.6 673.5,736.6 674.5,736.6 675.5,736.6 676.5,736.6 677.5,736.6 678.5,736.6 679.5,736.6 680.5,736.6 681.5,736.6 682.5,736.6 683.5,736.6 684.5,736.6 685.5,736.6 686.5,736.6 687.5,736.6 688.5,736.6 689.5,736.6 690.5,736.6 691.5,736.6 692.5,736.6 693.5,736.6 694.5,736.6 695.5,736.6 696.5,736.6 697.5,736.6 698.5,736.6 699.5,736.6 700.5,736.6 701.5,736.6 702.5,736.6 703.5,736.6 704.5,736.6 705.5,736.6 706.5,736.6 707.5,736.6 708.5,736.6 709.5,736.6 710.5,736.6 711.5,736.6 712.5,736.6 713.5,736.6 714.6,736.6 715.6,736.6 716.6,736.6 717.6,736.6 718.6,736.6 719.6,736.6 720.6,736.6 721.6,736.6 722.6,736.6 723.6,736.6 724.6,736.6 725.6,736.6 726.6,736.6 727.6,736.6 728.6,736.6 729.6,736.6 730.6,736.6 731.6,736.6 732.6,736.6 733.6,736.6 734.6,736.6 735.6,736.6 736.6,736.6 737.6,736.6 738.6,736.6 739.6,736.6 740.6,736.6 741.6,736.6 742.6,736.6 743.6,736.6 744.6,736.6 745.6,736.6 746.6,736.6 747.6,736.6 748.5,733.0 749.5,731.6 750.5,730.2 751.5,729.2 752.5,726.8 753.6,726.3 754.6,724.9 755.6,723.9 756.6,723.0 757.8,723.9 759.0,723.5 760.2,724.0 761.3,723.7 762.4,724.3 763.4,724.4 764.5,725.4 765.6,725.4 766.7,725.5 767.8,725.4 768.8,725.6 769.9,726.2 771.0,726.7 772.1,726.4 773.2,726.5 774.2,725.6 775.3,725.6 776.4,725.6 777.5,725.6 778.6,724.1 779.6,724.5 780.7,723.3 781.8,724.0 782.8,723.9 783.8,723.1 784.8,722.3 785.8,722.1 786.8,721.0 787.8,719.7 788.8,720.0 789.8,719.8 790.8,718.6 791.8,717.4 792.8,715.6 793.8,714.9 794.8,713.9 795.8,713.0 796.8,713.3 797.8,709.4 798.8,710.5 799.9,712.5 801.0,712.8 802.2,714.3 803.3,716.0 804.5,716.2 805.8,714.0 807.0,714.0 808.0,711.4 809.0,710.0 810.0,707.7 811.0,703.7 812.0,701.4 813.0,699.5 814.0,695.6 815.0,692.5 816.2,692.3 817.3,688.2 818.5,690.8 819.5,688.3 820.5,684.5 821.5,677.7 822.5,675.9 823.5,675.5 824.5,673.8 825.5,671.2 826.5,672.1 827.5,672.4 828.5,670.8 829.5,670.5 830.7,660.7 832.0,661.7 833.2,663.9 834.5,664.5 836.2,660.7 837.5,664.3 838.8,668.0 840.0,664.4 841.3,662.4 842.6,678.0 843.8,675.3 844.9,677.6 846.1,674.6 847.2,678.5 849.0,690.8 850.2,692.1 851.5,693.3 852.8,695.7 854.0,701.8 855.1,701.9 856.3,701.0 857.4,701.0 859.0,699.2 860.0,696.7 861.0,693.6 862.0,690.0 863.0,694.4 864.0,700.0 865.2,701.8 866.3,702.3 867.5,702.6 868.8,702.9 870.0,702.2 871.0,701.5 872.0,699.7 873.0,697.2 874.0,700.1 875.0,698.4 876.0,699.9 877.0,700.6 878.0,699.8 879.0,700.4 880.0,701.6 881.2,700.2 882.4,699.0 883.6,697.0 884.8,695.0 885.9,691.5 887.0,690.4 888.1,686.9 889.4,660.4 890.6,632.8 892.2,609.8 893.5,614.9 894.7,621.3 895.8,628.1 896.9,636.4 898.0,642.6 899.2,630.1 900.4,618.0 902.0,646.0 903.1,634.9 904.2,623.0 906.1,634.4 907.1,635.7 908.2,639.3 909.2,639.8 910.2,642.6 911.2,644.9 912.2,644.9 913.2,645.8 914.2,644.3 915.2,649.2 916.3,652.8 917.3,655.4 918.4,657.4 919.4,649.8 920.5,643.0 921.5,636.6 922.5,629.5 923.6,633.7 924.7,639.1 925.8,642.6 926.9,649.1 928.0,656.5 929.1,662.3 930.3,665.6 931.5,667.2 932.8,668.6 934.0,672.0 935.1,673.6 936.2,672.3 937.3,678.7 938.4,681.3 939.5,682.7 940.6,685.2 941.7,686.1 942.8,686.1 943.9,687.2 945.0,688.5 946.0,689.5 947.0,689.5 948.1,690.6 949.1,690.5 950.1,690.7 951.3,688.5 952.5,686.3 953.8,684.1 955.0,682.0 956.0,682.5 957.0,683.1 958.0,682.4 959.0,683.1 960.0,681.7 961.0,682.6 962.0,683.2 963.0,684.6 964.0,687.4 965.1,687.6 966.1,690.0 967.1,691.9 968.1,692.5 969.3,694.3 970.5,697.1 971.7,699.7 972.7,702.2 973.7,702.0 974.7,704.2 975.7,705.1 976.7,707.6 977.7,705.9 978.7,708.4 979.7,710.8 980.7,713.2 981.7,713.6 982.8,712.2 983.8,711.9 984.9,712.2 985.9,712.4 987.0,713.1 988.0,712.3 989.0,712.0 990.0,713.2 991.0,712.6 992.1,711.3 993.1,711.6 994.1,713.8 995.1,715.0 996.1,714.6 997.2,715.9 998.2,716.6 999.2,716.6 1000.2,717.6 1001.3,717.4 1002.3,718.6 1003.4,718.3 1004.5,719.2 1005.5,720.4 1006.6,720.4 1007.7,720.6 1008.8,719.5 1009.9,721.8 1010.9,722.2 1012.0,722.1 1013.1,723.1 1014.1,721.7 1015.2,721.1 1016.2,719.3 1017.2,718.9 1018.2,717.3 1019.3,715.7 1020.3,714.1 1021.3,715.0 1022.4,714.3 1023.4,717.1 1024.4,718.0 1025.4,720.5 1026.5,720.7 1027.5,722.2 1028.5,722.6 1029.5,723.2 1030.5,724.0 1031.5,725.5 1032.5,725.4 1033.5,726.2 1034.5,726.6 1035.5,727.8 1036.5,728.5 1037.5,728.1 1038.6,727.8 1039.6,727.8 1040.6,727.6 1041.6,727.0 1042.7,727.8 1043.7,727.7 1044.7,727.8 1045.8,727.2 1046.8,726.9 1047.8,727.2 1048.8,726.2 1049.9,727.1 1050.9,726.7 1051.9,726.8 1052.9,727.5 1053.9,728.1 1054.9,728.3 1055.9,728.8 1056.9,728.9 1057.9,728.9 1059.0,729.1 1060.0,730.3 1061.0,730.6 1062.0,730.5 1063.0,731.4 1064.0,731.6 1065.0,732.1 1066.0,732.4 1067.0,733.0 1068.0,732.7 1069.0,732.1 1070.0,731.7 1071.0,731.4 1072.0,730.9 1073.0,729.8 1074.0,729.8 1075.0,729.5 1076.2,729.2 1077.3,729.1 1078.5,729.6 1079.6,729.5 1080.8,729.5 1081.8,729.9 1082.8,729.4 1083.9,731.1 1084.9,730.9 1085.9,731.7 1087.0,732.0 1088.0,732.4 1089.0,733.0 1090.0,733.0 1091.0,733.5 1092.0,733.6 1093.0,733.7 1094.0,733.7 1095.0,733.9 1096.0,733.9 1097.0,734.2 1098.0,734.3 1099.0,734.6 1100.0,734.5 1101.0,734.9 1102.0,735.0 1103.0,735.1 1104.0,735.4 1105.0,735.4 1106.0,735.6 1107.0,735.7 1108.0,735.9 1109.0,736.0 1110.0,736.2 1111.0,736.2 1112.0,736.2 1113.0,736.2 1114.0,736.2 1115.0,736.2 1116.0,736.2 1117.0,736.2 1118.0,736.2 1119.0,736.2 1120.0,736.2 1121.0,736.2 1122.0,736.2 1123.0,736.2 1124.0,736.2 1125.0,736.2 1126.0,736.2 1127.0,736.2 1128.0,736.2 1129.0,736.2 1130.0,736.2 1131.0,736.2 1132.0,736.2 1133.0,736.2 1134.0,736.2 1135.0,736.2 1136.0,736.2 1137.0,736.2 1138.0,736.2 1139.0,736.2 1140.0,736.2 1141.0,736.2 1142.0,736.2 1143.0,736.2 1144.0,736.2 1145.0,736.2 1146.0,736.2 1147.0,736.2 1148.0,736.2 1149.0,736.2 1150.0,736.2 1151.0,736.2 1152.0,736.2 1153.0,736.2 1154.0,736.2 1155.0,736.2 1156.0,736.2 1157.0,736.3 1158.0,736.3 1159.0,736.3 1160.0,736.3 1161.0,736.3 1162.0,736.3 1163.0,736.3 1164.0,736.3 1165.0,736.3 1166.0,736.3 1167.0,736.3 1168.0,736.3 1169.0,736.3 1170.0,736.3 1171.0,736.3 1172.0,736.3 1173.0,736.3 1174.0,736.3 1175.0,736.3 1176.0,736.3 1177.0,736.3 1178.0,736.3 1179.0,736.3 1180.0,736.3 1181.0,736.3 1182.0,736.3 1183.0,736.3 1184.0,736.3 1185.0,736.3 1186.0,736.3 1187.0,736.3 1188.0,736.3 1189.0,736.3 1190.0,736.3 1191.0,736.3 1192.0,736.3 1193.0,736.3 1194.0,736.3 1195.0,736.3 1196.0,736.3 1197.0,736.3 1198.0,736.3 1199.0,736.3 1200.0,736.3 1201.0,736.3 1202.0,736.3 1203.0,736.3 1204.0,736.3 1205.0,736.3 1206.0,736.3 1207.0,736.3 1208.0,736.3 1209.0,736.3 1210.0,736.3 1211.0,736.3 1212.0,736.3 1213.0,736.3 1214.0,736.3 1215.0,736.3 1216.0,736.3 1217.0,736.3 1218.0,736.3 1219.0,736.3 1220.0,736.3 1221.0,736.3 1222.0,736.3 1223.0,736.3 1224.0,736.3 1225.0,736.3 1226.0,736.3 1227.0,736.3 1228.0,736.3 1229.0,736.3 1230.0,736.3 1231.0,736.3 1232.0,736.3 1233.0,736.3 1234.0,736.3 1235.0,736.3 1236.0,736.3 1237.0,736.3 1238.0,736.3 1239.0,736.3 1240.0,736.3 1241.0,736.3 1242.0,736.3 1243.0,736.3 1244.0,736.3 1245.0,736.3 1246.0,736.3 1247.0,736.3 1248.0,736.3 1249.0,736.4 1250.0,736.4 1251.0,736.4 1252.0,736.4 1253.0,736.4 1254.0,736.4 1255.0,736.4 1256.0,736.4 1257.0,736.4 1258.0,736.4 1259.0,736.4 1260.0,736.4 1261.0,736.4 1262.0,736.4 1263.0,736.4 1264.0,736.4 1265.0,736.4 1266.0,736.4 1267.0,736.4 1268.0,736.4 1269.0,736.4 1270.0,736.4 1271.0,736.4 1272.0,736.4 1273.0,736.4 1274.0,736.4 1275.0,736.4 1276.0,736.4 1277.0,736.4 1278.0,736.4 1279.0,736.4 1280.0,736.4 1281.0,736.4 1282.0,736.4 1283.0,736.4 1284.0,736.4 1285.0,736.4 1286.0,736.4 1287.0,736.4 1288.0,736.4 1289.0,736.4 1290.0,736.4 1291.0,736.4 1292.0,736.4 1293.0,736.4 1294.0,736.4 1295.0,736.4 1296.0,736.4 1297.0,736.4 1298.0,736.4 1299.0,736.4 1300.0,736.4 1301.0,736.4 1302.0,736.4 1303.0,736.4 1304.0,736.4 1305.0,736.4 1306.0,736.4 1307.0,736.4 1308.0,736.4 1309.0,736.4 1310.0,736.4 1311.0,736.4 1312.0,736.4 1313.0,736.4 1314.0,736.4 1315.0,736.4 1316.0,736.4 1317.0,736.4 1318.0,736.4 1319.0,736.4 1320.0,736.4 1321.0,736.4 1322.0,736.4 1323.0,736.4 1324.0,736.4 1325.0,736.4 1326.0,736.4 1327.0,736.4 1328.0,736.4 1329.0,736.4 1330.0,736.4 1331.0,736.4 1332.0,736.4 1333.0,736.4 1334.0,736.4 1335.0,736.4 1336.0,736.4 1337.0,736.4 1338.0,736.4 1339.0,736.4 1340.0,736.4 1341.0,736.5 1342.0,736.5 1343.0,736.5 1344.0,736.5 1345.0,736.5 1346.0,736.5 1347.0,736.5 1348.0,736.5 1349.0,736.5 1350.0,736.5 1351.0,736.5 1352.0,736.5 1353.0,736.5 1354.0,736.5 1355.0,736.5 1356.0,736.5 1357.0,736.5 1358.0,736.5 1359.0,736.5 1360.0,736.5 1361.0,736.5 1362.0,736.5 1363.0,736.5 1364.0,736.5 1365.0,736.5 1366.0,736.5 1367.0,736.5 1368.0,736.5 1369.0,736.5 1370.0,736.5 1371.0,736.5 1372.0,736.5 1373.0,736.5 1374.0,736.5 1375.0,736.5 1376.0,736.5 1377.0,736.5 1378.0,736.5 1379.0,736.5 1380.0,736.5 1381.0,736.5 1382.0,736.5 1383.0,736.5 1384.0,736.5 1385.0,736.5 1386.0,736.5 1387.0,736.5 1388.0,736.5 1389.0,736.5 1390.0,736.5 1391.0,736.5 1392.0,736.5 1393.0,736.5 1394.0,736.5 1395.0,736.5 1396.0,736.5 1397.0,736.5 1398.0,736.5 1399.0,736.5 1400.0,736.5 1401.0,736.5 1402.0,736.5 1403.0,736.5 1404.0,736.5 1405.0,736.5 1406.0,736.5 1407.0,736.5 1408.0,736.5 1409.0,736.5 1410.0,736.5 1411.0,736.5 1412.0,736.5 1413.0,736.5 1414.0,736.5 1415.0,736.5 1416.0,736.5 1417.0,736.5 1418.0,736.5 1419.0,736.5 1420.0,736.5 1421.0,736.5 1422.0,736.5 1423.0,736.5 1424.0,736.5 1425.0,736.5 1426.0,736.5 1427.0,736.5 1428.0,736.5 1429.0,736.5 1430.0,736.5 1431.0,736.5 1432.0,736.5 1433.0,736.6 1434.0,736.6 1435.0,736.6 1436.0,736.6 1437.0,736.6 1438.0,736.6 1439.0,736.6 1440.0,736.6 1441.0,736.6 1442.0,736.6 1443.0,736.6 1444.0,736.6 1445.0,736.6 1446.0,736.6 1447.0,736.6 1448.0,736.6 1449.0,736.6 1450.0,736.6 1451.0,736.6 1452.0,736.6 1453.0,736.6 1454.0,736.6 1455.0,736.6 1456.0,736.6 1457.0,736.6 1458.0,736.6 1459.0,736.6 1460.0,736.6 1461.0,736.6 1462.0,736.6 1463.0,736.6 1464.0,736.6 1465.0,736.6 1466.0,736.6 1467.0,736.6 1468.0,736.6 1469.0,736.6 1470.0,736.6 1471.0,736.6 1472.0,736.6 1473.0,736.6 1474.0,736.6 1475.0,736.6 1476.0,736.6 1477.0,736.6 1478.0,736.6 1479.0,736.6" fill="none" stroke="#f1c232" stroke-width="1.2" stroke-linejoin="round"/>
<line x1="343" y1="736.5" x2="1479" y2="736.5" stroke="#f2c43a" stroke-width="1"/>
<line x1="343" y1="812.5" x2="1479" y2="812.5" stroke="#333" stroke-width="1"/>
<text x="329" y="289.5" text-anchor="end" font-family="Liberation Sans" font-size="11" fill="#555">3.000 w</text>
<text x="329" y="364.8" text-anchor="end" font-family="Liberation Sans" font-size="11" fill="#555">2.500 w</text>
<text x="329" y="440.0" text-anchor="end" font-family="Liberation Sans" font-size="11" fill="#555">2.000 w</text>
<text x="329" y="515.3" text-anchor="end" font-family="Liberation Sans" font-size="11" fill="#555">1.500 w</text>
<text x="329" y="590.5" text-anchor="end" font-family="Liberation Sans" font-size="11" fill="#555">1.000 w</text>
<text x="329" y="665.8" text-anchor="end" font-family="Liberation Sans" font-size="11" fill="#555">500 w</text>
<text x="329" y="741.0" text-anchor="end" font-family="Liberation Sans" font-size="11" fill="#555">0 w</text>
<text x="329" y="816.3" text-anchor="end" font-family="Liberation Sans" font-size="11" fill="#555">-500 w</text>
<text transform="translate(342.20,832.6) rotate(-45)" text-anchor="end" dominant-baseline="central" font-family="Liberation Sans" font-weight="bold" font-size="10" fill="#333">00:00</text>
<text transform="translate(356.02,832.6) rotate(-45)" text-anchor="end" dominant-baseline="central" font-family="Liberation Sans" font-weight="bold" font-size="10" fill="#333">00:16</text>
<text transform="translate(369.84,832.6) rotate(-45)" text-anchor="end" dominant-baseline="central" font-family="Liberation Sans" font-weight="bold" font-size="10" fill="#333">00:33</text>
<text transform="translate(383.66,832.6) rotate(-45)" text-anchor="end" dominant-baseline="central" font-family="Liberation Sans" font-weight="bold" font-size="10" fill="#333">00:50</text>
<text transform="translate(397.48,832.6) rotate(-45)" text-anchor="end" dominant-baseline="central" font-family="Liberation Sans" font-weight="bold" font-size="10" fill="#333">01:07</text>
<text transform="translate(411.30,832.6) rotate(-45)" text-anchor="end" dominant-baseline="central" font-family="Liberation Sans" font-weight="bold" font-size="10" fill="#333">01:23</text>
<text transform="translate(425.12,832.6) rotate(-45)" text-anchor="end" dominant-baseline="central" font-family="Liberation Sans" font-weight="bold" font-size="10" fill="#333">01:40</text>
<text transform="translate(438.94,832.6) rotate(-45)" text-anchor="end" dominant-baseline="central" font-family="Liberation Sans" font-weight="bold" font-size="10" fill="#333">01:57</text>
<text transform="translate(452.76,832.6) rotate(-45)" text-anchor="end" dominant-baseline="central" font-family="Liberation Sans" font-weight="bold" font-size="10" fill="#333">02:14</text>
<text transform="translate(466.58,832.6) rotate(-45)" text-anchor="end" dominant-baseline="central" font-family="Liberation Sans" font-weight="bold" font-size="10" fill="#333">02:30</text>
<text transform="translate(480.40,832.6) rotate(-45)" text-anchor="end" dominant-baseline="central" font-family="Liberation Sans" font-weight="bold" font-size="10" fill="#333">02:53</text>
<text transform="translate(494.22,832.6) rotate(-45)" text-anchor="end" dominant-baseline="central" font-family="Liberation Sans" font-weight="bold" font-size="10" fill="#333">03:10</text>
<text transform="translate(508.04,832.6) rotate(-45)" text-anchor="end" dominant-baseline="central" font-family="Liberation Sans" font-weight="bold" font-size="10" fill="#333">03:27</text>
<text transform="translate(521.86,832.6) rotate(-45)" text-anchor="end" dominant-baseline="central" font-family="Liberation Sans" font-weight="bold" font-size="10" fill="#333">04:55</text>
<text transform="translate(535.68,832.6) rotate(-45)" text-anchor="end" dominant-baseline="central" font-family="Liberation Sans" font-weight="bold" font-size="10" fill="#333">05:11</text>
<text transform="translate(549.50,832.6) rotate(-45)" text-anchor="end" dominant-baseline="central" font-family="Liberation Sans" font-weight="bold" font-size="10" fill="#333">05:28</text>
<text transform="translate(563.32,832.6) rotate(-45)" text-anchor="end" dominant-baseline="central" font-family="Liberation Sans" font-weight="bold" font-size="10" fill="#333">05:44</text>
<text transform="translate(577.14,832.6) rotate(-45)" text-anchor="end" dominant-baseline="central" font-family="Liberation Sans" font-weight="bold" font-size="10" fill="#333">06:01</text>
<text transform="translate(590.96,832.6) rotate(-45)" text-anchor="end" dominant-baseline="central" font-family="Liberation Sans" font-weight="bold" font-size="10" fill="#333">06:18</text>
<text transform="translate(604.78,832.6) rotate(-45)" text-anchor="end" dominant-baseline="central" font-family="Liberation Sans" font-weight="bold" font-size="10" fill="#333">06:35</text>
<text transform="translate(618.60,832.6) rotate(-45)" text-anchor="end" dominant-baseline="central" font-family="Liberation Sans" font-weight="bold" font-size="10" fill="#333">06:51</text>
<text transform="translate(632.42,832.6) rotate(-45)" text-anchor="end" dominant-baseline="central" font-family="Liberation Sans" font-weight="bold" font-size="10" fill="#333">07:08</text>
<text transform="translate(646.24,832.6) rotate(-45)" text-anchor="end" dominant-baseline="central" font-family="Liberation Sans" font-weight="bold" font-size="10" fill="#333">07:24</text>
<text transform="translate(660.06,832.6) rotate(-45)" text-anchor="end" dominant-baseline="central" font-family="Liberation Sans" font-weight="bold" font-size="10" fill="#333">07:41</text>
<text transform="translate(673.88,832.6) rotate(-45)" text-anchor="end" dominant-baseline="central" font-family="Liberation Sans" font-weight="bold" font-size="10" fill="#333">07:58</text>
<text transform="translate(687.70,832.6) rotate(-45)" text-anchor="end" dominant-baseline="central" font-family="Liberation Sans" font-weight="bold" font-size="10" fill="#333">08:15</text>
<text transform="translate(701.52,832.6) rotate(-45)" text-anchor="end" dominant-baseline="central" font-family="Liberation Sans" font-weight="bold" font-size="10" fill="#333">08:31</text>
<text transform="translate(715.34,832.6) rotate(-45)" text-anchor="end" dominant-baseline="central" font-family="Liberation Sans" font-weight="bold" font-size="10" fill="#333">08:48</text>
<text transform="translate(729.16,832.6) rotate(-45)" text-anchor="end" dominant-baseline="central" font-family="Liberation Sans" font-weight="bold" font-size="10" fill="#333">09:04</text>
<text transform="translate(742.98,832.6) rotate(-45)" text-anchor="end" dominant-baseline="central" font-family="Liberation Sans" font-weight="bold" font-size="10" fill="#333">09:21</text>
<text transform="translate(756.80,832.6) rotate(-45)" text-anchor="end" dominant-baseline="central" font-family="Liberation Sans" font-weight="bold" font-size="10" fill="#333">09:37</text>
<text transform="translate(770.62,832.6) rotate(-45)" text-anchor="end" dominant-baseline="central" font-family="Liberation Sans" font-weight="bold" font-size="10" fill="#333">09:54</text>
<text transform="translate(784.44,832.6) rotate(-45)" text-anchor="end" dominant-baseline="central" font-family="Liberation Sans" font-weight="bold" font-size="10" fill="#333">10:10</text>
<text transform="translate(798.26,832.6) rotate(-45)" text-anchor="end" dominant-baseline="central" font-family="Liberation Sans" font-weight="bold" font-size="10" fill="#333">10:27</text>
<text transform="translate(812.08,832.6) rotate(-45)" text-anchor="end" dominant-baseline="central" font-family="Liberation Sans" font-weight="bold" font-size="10" fill="#333">10:43</text>
<text transform="translate(825.90,832.6) rotate(-45)" text-anchor="end" dominant-baseline="central" font-family="Liberation Sans" font-weight="bold" font-size="10" fill="#333">10:59</text>
<text transform="translate(839.72,832.6) rotate(-45)" text-anchor="end" dominant-baseline="central" font-family="Liberation Sans" font-weight="bold" font-size="10" fill="#333">11:16</text>
<text transform="translate(853.54,832.6) rotate(-45)" text-anchor="end" dominant-baseline="central" font-family="Liberation Sans" font-weight="bold" font-size="10" fill="#333">11:32</text>
<text transform="translate(867.36,832.6) rotate(-45)" text-anchor="end" dominant-baseline="central" font-family="Liberation Sans" font-weight="bold" font-size="10" fill="#333">11:49</text>
<text transform="translate(881.18,832.6) rotate(-45)" text-anchor="end" dominant-baseline="central" font-family="Liberation Sans" font-weight="bold" font-size="10" fill="#333">12:05</text>
<text transform="translate(895.00,832.6) rotate(-45)" text-anchor="end" dominant-baseline="central" font-family="Liberation Sans" font-weight="bold" font-size="10" fill="#333">12:21</text>
<text transform="translate(908.82,832.6) rotate(-45)" text-anchor="end" dominant-baseline="central" font-family="Liberation Sans" font-weight="bold" font-size="10" fill="#333">12:38</text>
<text transform="translate(922.64,832.6) rotate(-45)" text-anchor="end" dominant-baseline="central" font-family="Liberation Sans" font-weight="bold" font-size="10" fill="#333">12:54</text>
<text transform="translate(936.46,832.6) rotate(-45)" text-anchor="end" dominant-baseline="central" font-family="Liberation Sans" font-weight="bold" font-size="10" fill="#333">13:11</text>
<text transform="translate(950.28,832.6) rotate(-45)" text-anchor="end" dominant-baseline="central" font-family="Liberation Sans" font-weight="bold" font-size="10" fill="#333">13:27</text>
<text transform="translate(964.10,832.6) rotate(-45)" text-anchor="end" dominant-baseline="central" font-family="Liberation Sans" font-weight="bold" font-size="10" fill="#333">13:44</text>
<text transform="translate(977.92,832.6) rotate(-45)" text-anchor="end" dominant-baseline="central" font-family="Liberation Sans" font-weight="bold" font-size="10" fill="#333">14:00</text>
<text transform="translate(991.74,832.6) rotate(-45)" text-anchor="end" dominant-baseline="central" font-family="Liberation Sans" font-weight="bold" font-size="10" fill="#333">14:17</text>
<text transform="translate(1005.56,832.6) rotate(-45)" text-anchor="end" dominant-baseline="central" font-family="Liberation Sans" font-weight="bold" font-size="10" fill="#333">14:33</text>
<text transform="translate(1019.38,832.6) rotate(-45)" text-anchor="end" dominant-baseline="central" font-family="Liberation Sans" font-weight="bold" font-size="10" fill="#333">14:49</text>
<text transform="translate(1033.20,832.6) rotate(-45)" text-anchor="end" dominant-baseline="central" font-family="Liberation Sans" font-weight="bold" font-size="10" fill="#333">15:06</text>
<text transform="translate(1047.02,832.6) rotate(-45)" text-anchor="end" dominant-baseline="central" font-family="Liberation Sans" font-weight="bold" font-size="10" fill="#333">15:22</text>
<text transform="translate(1060.84,832.6) rotate(-45)" text-anchor="end" dominant-baseline="central" font-family="Liberation Sans" font-weight="bold" font-size="10" fill="#333">15:39</text>
<text transform="translate(1074.66,832.6) rotate(-45)" text-anchor="end" dominant-baseline="central" font-family="Liberation Sans" font-weight="bold" font-size="10" fill="#333">15:55</text>
<text transform="translate(1088.48,832.6) rotate(-45)" text-anchor="end" dominant-baseline="central" font-family="Liberation Sans" font-weight="bold" font-size="10" fill="#333">16:12</text>
<text transform="translate(1102.30,832.6) rotate(-45)" text-anchor="end" dominant-baseline="central" font-family="Liberation Sans" font-weight="bold" font-size="10" fill="#333">16:28</text>
<text transform="translate(1116.12,832.6) rotate(-45)" text-anchor="end" dominant-baseline="central" font-family="Liberation Sans" font-weight="bold" font-size="10" fill="#333">16:44</text>
<text transform="translate(1129.94,832.6) rotate(-45)" text-anchor="end" dominant-baseline="central" font-family="Liberation Sans" font-weight="bold" font-size="10" fill="#333">17:01</text>
<text transform="translate(1143.76,832.6) rotate(-45)" text-anchor="end" dominant-baseline="central" font-family="Liberation Sans" font-weight="bold" font-size="10" fill="#333">17:18</text>
<text transform="translate(1157.58,832.6) rotate(-45)" text-anchor="end" dominant-baseline="central" font-family="Liberation Sans" font-weight="bold" font-size="10" fill="#333">17:35</text>
<text transform="translate(1171.40,832.6) rotate(-45)" text-anchor="end" dominant-baseline="central" font-family="Liberation Sans" font-weight="bold" font-size="10" fill="#333">17:51</text>
<text transform="translate(1185.22,832.6) rotate(-45)" text-anchor="end" dominant-baseline="central" font-family="Liberation Sans" font-weight="bold" font-size="10" fill="#333">18:08</text>
<text transform="translate(1199.04,832.6) rotate(-45)" text-anchor="end" dominant-baseline="central" font-family="Liberation Sans" font-weight="bold" font-size="10" fill="#333">18:25</text>
<text transform="translate(1212.86,832.6) rotate(-45)" text-anchor="end" dominant-baseline="central" font-family="Liberation Sans" font-weight="bold" font-size="10" fill="#333">18:41</text>
<text transform="translate(1226.68,832.6) rotate(-45)" text-anchor="end" dominant-baseline="central" font-family="Liberation Sans" font-weight="bold" font-size="10" fill="#333">18:58</text>
<text transform="translate(1240.50,832.6) rotate(-45)" text-anchor="end" dominant-baseline="central" font-family="Liberation Sans" font-weight="bold" font-size="10" fill="#333">19:15</text>
<text transform="translate(1254.32,832.6) rotate(-45)" text-anchor="end" dominant-baseline="central" font-family="Liberation Sans" font-weight="bold" font-size="10" fill="#333">19:31</text>
<text transform="translate(1268.14,832.6) rotate(-45)" text-anchor="end" dominant-baseline="central" font-family="Liberation Sans" font-weight="bold" font-size="10" fill="#333">19:48</text>
<text transform="translate(1281.96,832.6) rotate(-45)" text-anchor="end" dominant-baseline="central" font-family="Liberation Sans" font-weight="bold" font-size="10" fill="#333">20:05</text>
<text transform="translate(1295.78,832.6) rotate(-45)" text-anchor="end" dominant-baseline="central" font-family="Liberation Sans" font-weight="bold" font-size="10" fill="#333">20:21</text>
<text transform="translate(1309.60,832.6) rotate(-45)" text-anchor="end" dominant-baseline="central" font-family="Liberation Sans" font-weight="bold" font-size="10" fill="#333">20:38</text>
<text transform="translate(1323.42,832.6) rotate(-45)" text-anchor="end" dominant-baseline="central" font-family="Liberation Sans" font-weight="bold" font-size="10" fill="#333">20:55</text>
<text transform="translate(1337.24,832.6) rotate(-45)" text-anchor="end" dominant-baseline="central" font-family="Liberation Sans" font-weight="bold" font-size="10" fill="#333">21:11</text>
<text transform="translate(1351.06,832.6) rotate(-45)" text-anchor="end" dominant-baseline="central" font-family="Liberation Sans" font-weight="bold" font-size="10" fill="#333">21:28</text>
<text transform="translate(1364.88,832.6) rotate(-45)" text-anchor="end" dominant-baseline="central" font-family="Liberation Sans" font-weight="bold" font-size="10" fill="#333">21:45</text>
<text transform="translate(1378.70,832.6) rotate(-45)" text-anchor="end" dominant-baseline="central" font-family="Liberation Sans" font-weight="bold" font-size="10" fill="#333">22:01</text>
<text transform="translate(1392.52,832.6) rotate(-45)" text-anchor="end" dominant-baseline="central" font-family="Liberation Sans" font-weight="bold" font-size="10" fill="#333">22:18</text>
<text transform="translate(1406.34,832.6) rotate(-45)" text-anchor="end" dominant-baseline="central" font-family="Liberation Sans" font-weight="bold" font-size="10" fill="#333">22:34</text>
<text transform="translate(1420.16,832.6) rotate(-45)" text-anchor="end" dominant-baseline="central" font-family="Liberation Sans" font-weight="bold" font-size="10" fill="#333">22:51</text>
<text transform="translate(1433.98,832.6) rotate(-45)" text-anchor="end" dominant-baseline="central" font-family="Liberation Sans" font-weight="bold" font-size="10" fill="#333">23:08</text>
<text transform="translate(1447.80,832.6) rotate(-45)" text-anchor="end" dominant-baseline="central" font-family="Liberation Sans" font-weight="bold" font-size="10" fill="#333">23:25</text>
<text transform="translate(1461.62,832.6) rotate(-45)" text-anchor="end" dominant-baseline="central" font-family="Liberation Sans" font-weight="bold" font-size="10" fill="#333">23:41</text>
<text transform="translate(1475.44,832.6) rotate(-45)" text-anchor="end" dominant-baseline="central" font-family="Liberation Sans" font-weight="bold" font-size="10" fill="#333">23:58</text>
</svg>

<!-- legend -->
<div class="ldot" style="left:587px;background:#fdd835"></div>
<div class="legend" style="left:605px">Actual solar power</div>
<div class="ldot" style="left:717px;background:#7a7a7a"></div>
<div class="legend" style="left:735px">Grid power</div>
<div class="ldot" style="left:812px;background:#dcdcdc"></div>
<div class="legend" style="left:830px">Plant power</div>
<div class="ldot" style="left:912px;background:#f8bc00"></div>
<div class="legend" style="left:930px">Plant power direct sun</div>
<div class="ldot" style="left:1060px;background:#666"></div>
<div class="legend" style="left:1078px;color:#777;text-decoration:line-through">Plant power direct grid</div>
<div class="a" style="left:1047.5px;top:860.5px;width:149px;height:40px;border:2.2px solid #ee4848;border-radius:7px"></div>
<svg class="chart" width="1510" height="945" viewBox="0 0 1510 945" style="pointer-events:none">
<!-- logo -->
<defs>
<linearGradient id="lg1" x1="0" x2="1" y1="0" y2="0"><stop offset="0" stop-color="#74c28b"/><stop offset="1" stop-color="#86d39c"/></linearGradient>
<linearGradient id="lg2" x1="0" x2="1" y1="0" y2="0"><stop offset="0" stop-color="#5ec2a0"/><stop offset="1" stop-color="#50b293"/></linearGradient>
</defs>
<rect x="25" y="51" width="7" height="26" fill="url(#lg1)"/>
<rect x="38" y="51" width="7" height="26" fill="url(#lg2)"/>
<path d="M39,61.2 L31.5,61.2 Q28.2,61.8 26.4,66.3 L39,66.3 Z" fill="#55b898"/>
<path d="M31.5,60.9 Q27.9,61.5 26,66.4" fill="none" stroke="#f2f2f2" stroke-width="0.7"/>
<!-- network icon -->
<g fill="none" stroke="#2a2a2a">
<circle cx="89.9" cy="66" r="3.1" stroke-width="1.4"/>
<circle cx="86.2" cy="57.6" r="1.9" stroke-width="1.2"/>
<circle cx="98" cy="70.8" r="1.9" stroke-width="1.2"/>
<path d="M88.6,63 L86.9,59.5 M92.6,67.8 L96.4,70 M93,63.3 L95.6,61.8" stroke-width="1.1"/>
<path d="M82.4,66 L85.6,66" stroke-width="1" stroke="#777"/>
</g>
<circle cx="98.2" cy="59.6" r="2.1" fill="#2a2a2a"/>
<circle cx="80.1" cy="66" r="2.1" fill="#2a2a2a"/>
<!-- chevrons -->
<path d="M165.8,62.6 L169.5,66.3 L173.2,62.6" fill="none" stroke="#222" stroke-width="1.8"/>
<path d="M189,115.3 L193,119.3 L197,115.3" fill="none" stroke="#fff" stroke-width="2"/>
<!-- sidebar gauge -->
<g stroke="#505050" fill="none">
<path d="M26.4,124.7 A9.3,9.3 0 1 1 42.2,124.7 Z" stroke-width="1.8" stroke-linejoin="round"/>
</g>
<g fill="#505050">
<circle cx="28.7" cy="120.5" r="1.15"/><circle cx="30.4" cy="116.5" r="1.15"/><circle cx="34" cy="114.8" r="1.1"/><circle cx="38.7" cy="116.6" r="1.1"/><circle cx="40" cy="120.5" r="1.15"/>
<path d="M32.2,122.9 Q32.1,120.2 34,119.4 L36.1,114 Q36.6,113.4 37,114 L35.8,119.6 Q36.8,120.6 36.6,122.9 Z"/>
</g>
<!-- invoice -->
<g stroke="#828282" fill="none" stroke-width="1.9" stroke-linejoin="round">
<path d="M29,158.2 H37.4 L41.9,162.7 V174.7 H29 Z"/>
<path d="M36.6,158.4 V162.2 Q36.6,163.9 38.2,163.9 H41.7"/>
<path d="M38.8,166.8 Q37.8,165.6 36.4,165.7 Q33.5,166 33.4,169.5 Q33.5,173 36.4,173.3 Q37.8,173.4 38.8,172.2" stroke-width="1.5"/>
<path d="M32.6,168.7 H36.6 M32.6,170.5 H36.6" stroke-width="1.1"/>
</g>
<circle cx="32.1" cy="160.4" r="1" fill="#828282"/><circle cx="32.1" cy="163.6" r="1" fill="#828282"/>
<!-- QR -->
<g fill="#808080">
<path d="M26.4,206 h6.5 v6.9 h-6.5 Z M28.9,208.6 v1.8 h1.8 v-1.8 Z" fill-rule="evenodd"/>
<path d="M35.4,206 h6.5 v6.9 h-6.5 Z M37.9,208.6 v1.8 h1.8 v-1.8 Z" fill-rule="evenodd"/>
<path d="M26.4,215.2 h6.5 v6.6 h-6.5 Z M28.9,217.6 v1.8 h1.8 v-1.8 Z" fill-rule="evenodd"/>
<path d="M35.4,215.2 h2.4 v6.6 h-2.4 Z M37.8,215.2 h1.3 v1.6 h-1.3 Z M39.8,215.2 h2.1 v4.4 h-4.1 v-2 h2 Z"/>
<rect x="39" y="221" width="1.1" height="1.1"/><rect x="41.1" y="221" width="1.1" height="1.1"/>
</g>
<!-- key -->
<g stroke="#808080" fill="none" stroke-width="1.5" stroke-linejoin="round">
<path d="M30.9,261.4 A6,6 0 1 1 34.5,265.6 L33.6,266.3 V268.3 H31.5 V270.5 H25.9 V266.2 Z"/>
</g>
<circle cx="38.2" cy="258.3" r="1.4" fill="#808080"/>
<!-- sitemap -->
<g stroke="#808080" fill="none" stroke-width="1.5">
<rect x="32.6" y="301.4" width="5.3" height="3.6" rx="0.5"/>
<path d="M35.2,305 V313.3 M28.2,313.3 V309.3 H42.2 V313.3"/>
<rect x="26.1" y="315.3" width="4.1" height="3.7" rx="0.5"/>
<rect x="33.2" y="315.3" width="4.1" height="3.7" rx="0.5"/>
<rect x="40.2" y="315.3" width="4.1" height="3.7" rx="0.5"/>
</g>
<!-- gear bottom -->
<g transform="translate(34.5,909.1) scale(1.07)">
<path d="M-2.10,-5.19 L-1.89,-7.05 L1.89,-7.05 L2.10,-5.19 L3.45,-4.41 L5.16,-5.16 L7.05,-1.89 L5.55,-0.78 L5.55,0.78 L7.05,1.89 L5.16,5.16 L3.45,4.41 L2.10,5.19 L1.89,7.05 L-1.89,7.05 L-2.10,5.19 L-3.45,4.41 L-5.16,5.16 L-7.05,1.89 L-5.55,0.78 L-5.55,-0.78 L-7.05,-1.89 L-5.16,-5.16 L-3.45,-4.41 Z" fill="none" stroke="#7a7a7a" stroke-width="1.7" stroke-linejoin="round"/>
<circle r="2.7" fill="none" stroke="#7a7a7a" stroke-width="1.6"/>
</g>
<!-- bell -->
<g stroke="#7a7a7a" fill="none" stroke-width="1.7" stroke-linejoin="round">
<path d="M1406,69 Q1407.5,67.5 1407.5,63.5 Q1407.5,57.2 1412.8,56.6 Q1418.1,57.2 1418.1,63.5 Q1418.1,67.5 1419.6,69 Z"/>
</g>
<rect x="1412" y="53.8" width="1.6" height="2.4" rx="0.8" fill="#7a7a7a"/>
<path d="M1410.6,70.6 A2.2,2 0 0 0 1415,70.6 Z" fill="#7a7a7a"/>
<!-- avatar -->
<circle cx="1475" cy="64" r="14.8" fill="#f1f1f1"/>
<g>
<path d="M1463.5,74.5 Q1466,70.5 1471.5,69.2 L1475,71.5 L1478.5,69.2 Q1484,70.5 1486.5,74.5 Q1481.5,79 1475,79 Q1468.5,79 1463.5,74.5 Z" fill="#aaaaaa"/>
<path d="M1471.2,66 L1471.2,69.5 L1475,72 L1478.8,69.5 L1478.8,66 Z" fill="#c9c9c9"/>
<ellipse cx="1475" cy="61" rx="5" ry="6.6" fill="#cfcfcf"/>
<path d="M1469.8,61 Q1469.3,53.5 1474.5,52.5 Q1480.8,52.5 1480.2,61 L1479.5,58 Q1477,56.5 1472,57.5 L1470.5,61.5 Z" fill="#999"/>
</g>
<!-- toolbar icons -->
<circle cx="1219.4" cy="118.7" r="5.2" fill="none" stroke="#5cb85c" stroke-width="1.2"/>
<path d="M1219.4,115.6 V121.8 M1216.3,118.7 H1222.5" stroke="#5cb85c" stroke-width="1.2"/>
<path d="M1288.6,118.7 H1295.4" stroke="#111" stroke-width="1.2"/>
<path d="M1286.6,118.7 L1289.4,116.4 V121 Z M1297.4,118.7 L1294.6,116.4 V121 Z" fill="#111"/>
<g transform="translate(1376.5,118.7) scale(0.7)">
<path d="M-2.10,-5.19 L-1.89,-7.05 L1.89,-7.05 L2.10,-5.19 L3.45,-4.41 L5.16,-5.16 L7.05,-1.89 L5.55,-0.78 L5.55,0.78 L7.05,1.89 L5.16,5.16 L3.45,4.41 L2.10,5.19 L1.89,7.05 L-1.89,7.05 L-2.10,5.19 L-3.45,4.41 L-5.16,5.16 L-7.05,1.89 L-5.55,0.78 L-5.55,-0.78 L-7.05,-1.89 L-5.16,-5.16 L-3.45,-4.41 Z" fill="none" stroke="#222" stroke-width="1.7" stroke-linejoin="round"/>
<circle r="2.6" fill="none" stroke="#222" stroke-width="1.7"/>
</g>
<g fill="none" stroke="#8a8a8a" stroke-width="1.1" stroke-linejoin="round">
<path d="M1453,114.2 L1458,116.6 L1453,119 L1448,116.6 Z"/>
<path d="M1448.2,119 L1453,121.3 L1457.8,119"/>
<path d="M1448.2,121.4 L1453,123.7 L1457.8,121.4"/>
</g>
<!-- search icon -->
<circle cx="82.8" cy="166.6" r="3.9" fill="none" stroke="#707070" stroke-width="1.9"/>
<path d="M85.9,169.7 L88.7,172.5" stroke="#707070" stroke-width="2.2" stroke-linecap="round"/>
<!-- section icons -->
<g fill="none" stroke="#b8a878" stroke-width="1.2" stroke-linejoin="round">
<path d="M85.5,202.6 L90.6,205.3 L85.5,208 L80.4,205.3 Z"/>
<path d="M80.5,207.7 L85.5,210.4 L90.5,207.7"/>
<path d="M80.5,210.2 L85.5,212.8 L90.5,210.2"/>
</g>
<path d="M80,572 H85.5 L91,577.7 L85.3,583.5 L80,578.2 Z" fill="#8fd6ca"/>
<circle cx="82.3" cy="574.3" r="0.8" fill="#fff"/>
<rect x="80.6" y="690.4" width="10" height="4.4" rx="2.2" fill="none" stroke="#e0ce84" stroke-width="1.1"/>
<rect x="80" y="696.3" width="11.1" height="5" rx="2.5" fill="#e0ce84"/>
<circle cx="88.5" cy="698.8" r="1.1" fill="#fff"/>
<circle cx="82.4" cy="692.6" r="0.9" fill="#e0ce84"/>
<!-- widget item icons -->
<g id="ic-linechart" fill="none" stroke="#555" stroke-width="1.5" stroke-linejoin="round" stroke-linecap="round">
<path d="M95.1,232.6 V242.4 H108.4"/>
<path d="M97.7,237.7 L99.6,235.4 L102.4,238.6 L105.4,235.6"/>
</g>
<path d="M104.4,233.2 L107.9,233 L107.7,236.6 Z" fill="#555" stroke="#555" stroke-width="1" stroke-linejoin="round"/>
<g fill="none" stroke="#555" stroke-width="1.5" stroke-linejoin="round">
<path d="M100.4,274.3 A6.3,6.3 0 1 0 107.6,281.4 H100.4 Z"/>
<path d="M102.6,273.2 A6,6 0 0 1 108.8,279.2 H102.6 Z"/>
</g>
<g fill="none" stroke="#555" stroke-width="1.5" stroke-linejoin="miter">
<path d="M94.9,315.3 H100.3 V321.5 L108.1,320.4 V328.6 H94.9 Z"/>
<path d="M100.1,321.5 V325.6"/>
</g>
<g fill="#555"><circle cx="97.4" cy="317.9" r="0.7"/><circle cx="97.4" cy="320.8" r="0.7"/><circle cx="97.4" cy="323.5" r="0.7"/><circle cx="103.2" cy="323.5" r="0.7"/><circle cx="106" cy="323.5" r="0.7"/></g>
<g id="ic-list">
<rect x="94.9" y="357.6" width="13.2" height="13.1" rx="1.2" fill="none" stroke="#555" stroke-width="1.5"/>
<g fill="#555"><circle cx="97.8" cy="360.4" r="0.85"/><circle cx="97.8" cy="364.2" r="0.85"/><circle cx="97.8" cy="368" r="0.85"/>
<rect x="100.5" y="359.7" width="5.5" height="1.4" rx="0.7"/><rect x="100.5" y="363.5" width="5.5" height="1.4" rx="0.7"/><rect x="100.5" y="367.3" width="5.5" height="1.4" rx="0.7"/></g>
</g>
<use href="#ic-list" transform="translate(0,42)"/>
<g id="ic-gauge">
<path d="M95.4,453 A7.6,7.6 0 1 1 108.6,453 Z" fill="none" stroke="#555" stroke-width="1.5" stroke-linejoin="round"/>
<g fill="#555"><circle cx="97.5" cy="449.4" r="0.8"/><circle cx="101.7" cy="445" r="0.8"/><circle cx="104.9" cy="446.3" r="0.8"/><circle cx="106.3" cy="449.4" r="0.8"/>
<path d="M98.6,446.5 L99.6,446 L103.6,450.2 L104,451.5 L100.6,451.5 L101.2,449.8 Z"/></g>
</g>
<!-- EV -->
<g fill="#555">
<path d="M95.2,483.8 H102.5 V494 H95.2 Z M98.6,485.6 L97.1,489 H98.7 L97.9,491.8 L100.6,487.8 H99 L99.9,485.6 Z" fill-rule="evenodd"/>
<rect x="94.1" y="495.2" width="9.6" height="1.6" rx="0.4"/>
<path d="M106.2,484.2 V486 M108.4,484.2 V486" stroke="#555" stroke-width="1"/>
<path d="M105.3,485.8 H109.3 V487.2 Q109.3,489.3 107.3,489.5 Q105.3,489.3 105.3,487.2 Z"/>
</g>
<path d="M102.5,490.2 Q104.5,490 104.5,492.5 Q104.5,494.6 106,494.6 Q107.3,494.6 107.3,492.5 V489.3" fill="none" stroke="#555" stroke-width="1.1"/>
<!-- chip -->
<rect x="98.2" y="525.6" width="6.6" height="13.1" rx="1" fill="none" stroke="#555" stroke-width="1.5"/>
<g fill="#555">
<path d="M94,527.4 L95.6,526.2 H97.5 V528.6 H95.6 Z M94,532.2 L95.6,531 H97.5 V533.4 H95.6 Z M94,536.8 L95.6,535.6 H97.5 V538 H95.6 Z"/>
<path d="M109,527.4 L107.4,526.2 H105.5 V528.6 H107.4 Z M109,532.2 L107.4,531 H105.5 V533.4 H107.4 Z M109,536.8 L107.4,535.6 H105.5 V538 H107.4 Z"/>
</g>
<!-- coins euro -->
<g fill="none" stroke="#555" stroke-width="1.1">
<ellipse cx="103.6" cy="608" rx="4.6" ry="6.9"/>
<path d="M105.4,605.1 Q104.6,604.2 103.7,604.3 Q101.7,604.7 101.7,608 Q101.7,611.3 103.7,611.7 Q104.6,611.8 105.4,610.9" stroke-width="1.2"/>
<path d="M100.8,607.3 H104 M100.8,608.9 H104" stroke-width="0.9"/>
<path d="M100.4,601.3 H94.6 V614.6 H101.5"/>
<path d="M94.9,605.2 H98.5 M94.9,608.3 H98 M94.9,611.3 H98.5" stroke-width="1"/>
<path d="M99.8,602 Q97.8,608 99.8,614" stroke-width="0.9"/>
</g>
<!-- epex chart -->
<g fill="none" stroke="#555" stroke-width="1.3" stroke-linejoin="round">
<path d="M95.8,648.4 L100,643.8 L104.4,647.6 L108.8,643.8"/>
<rect x="94.7" y="652.4" width="2.6" height="4.4" rx="1"/>
<rect x="99.1" y="649.2" width="2.8" height="7.6" rx="1"/>
<rect x="103.4" y="651.8" width="2.6" height="5" rx="1"/>
<rect x="107.6" y="649.2" width="2.8" height="7.6" rx="1"/>
</g>
<g fill="#555"><circle cx="95.8" cy="648.4" r="1.1"/><circle cx="100" cy="643.8" r="1.1"/><circle cx="108.8" cy="643.8" r="1.1"/></g>
<!-- line chart (advanced) -->
<use href="#ic-linechart" transform="translate(0,488)"/>
<path d="M104.4,721.2 L107.9,721 L107.7,724.6 Z" fill="#555" stroke="#555" stroke-width="1" stroke-linejoin="round"/>
<!-- stopwatch -->
<g fill="none" stroke="#555" stroke-width="1.5" stroke-linecap="round">
<circle cx="101.4" cy="768.8" r="5.2"/>
<path d="M99.4,761.3 H103.4 M101.4,761.3 V763.5 M101.4,766.3 V769.6 M105.2,764.6 L106.2,763.8"/>
</g>
<use href="#ic-gauge" transform="translate(0,362)"/>
<!-- bar chart -->
<g fill="none" stroke="#555" stroke-width="1.5" stroke-linecap="round" stroke-linejoin="round">
<path d="M95.1,846.4 V856.4 H108.6"/>
<path d="M97.6,852.3 V853.4 M100.4,848.6 V853.4 M103.1,850.6 V853.4 M105.6,847.4 V853.4"/>
</g>
<!-- date picker calendar -->
<g fill="#555">
<path d="M305.9,239.4 H316.6 V249.6 H305.9 Z M307.1,242.2 V248.5 H315.4 V242.2 Z" fill-rule="evenodd"/>
<rect x="307.8" y="237.4" width="1.1" height="2.6"/><rect x="313.6" y="237.4" width="1.1" height="2.6"/>
<rect x="308" y="243.3" width="1.3" height="1.2"/><rect x="310.6" y="243.3" width="1.3" height="1.2"/><rect x="313.2" y="243.3" width="1.3" height="1.2"/>
<rect x="308" y="245.6" width="1.3" height="1.2"/><rect x="310.6" y="245.6" width="1.3" height="1.2"/><rect x="313.2" y="245.6" width="1.3" height="1.2"/>
</g>
<!-- nav controls -->
<path d="M1415.8,240 L1412.3,243.4 L1415.8,246.8 Z" fill="#505050"/>
<path d="M1436.2,240 L1439.7,243.4 L1436.2,246.8 Z" fill="#505050"/>
<g fill="#505050">
<path d="M1456.8,239 H1467 V249.6 H1456.8 Z M1457.7,244.3 V246.4 H1459.8 V244.3 Z" fill-rule="evenodd"/>
<rect x="1458.4" y="237" width="1" height="2.5"/><rect x="1464.2" y="237" width="1" height="2.5"/>
</g>
<!-- download icon -->
<g stroke="#555" fill="none" stroke-width="1.6">
<path d="M305.8,872.2 V884.5"/>
<path d="M298.1,885.6 H314"/>
</g>
<path d="M302.2,880.6 L305.8,884.6 L309.4,880.6 Z" fill="#555"/>
</svg>

</body>
</html>
